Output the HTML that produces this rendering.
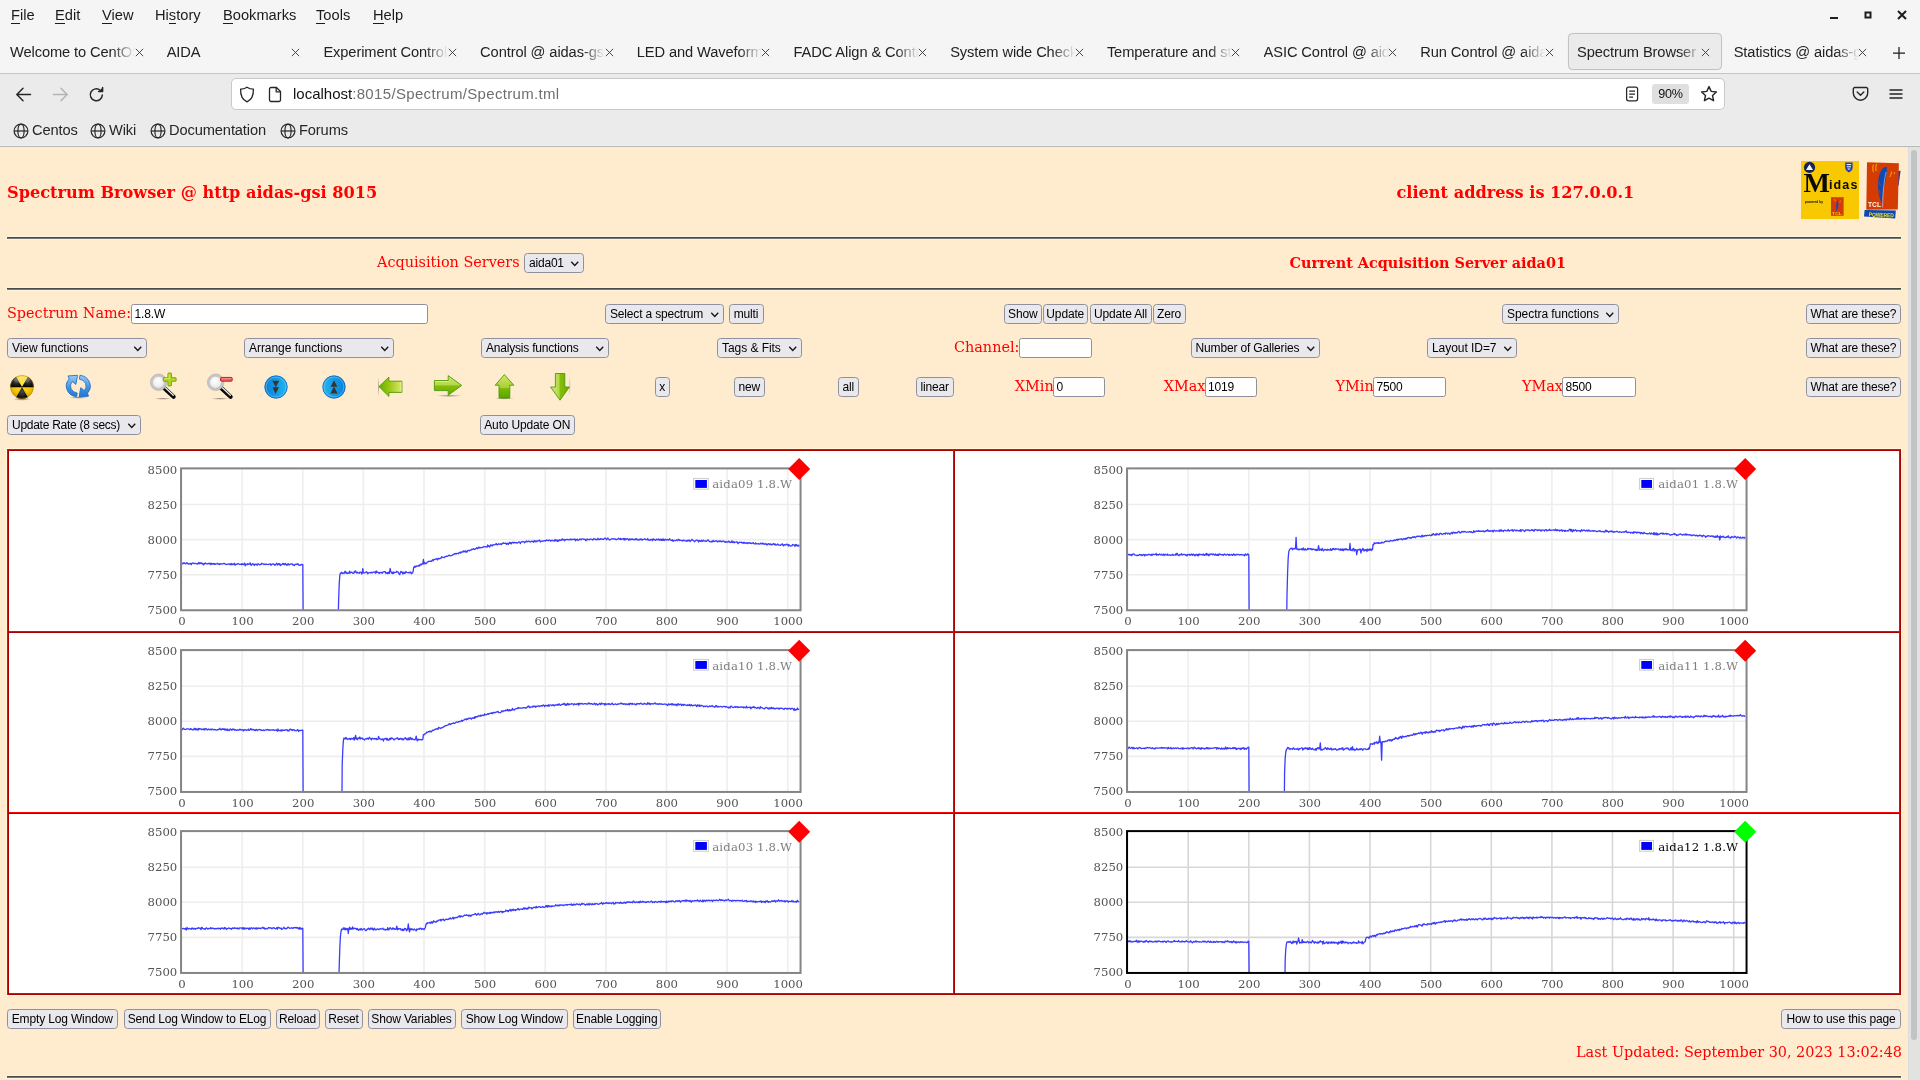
<!DOCTYPE html>
<html lang="en">
<head>
<meta charset="utf-8">
<title>Spectrum Browser</title>
<style>
*{box-sizing:border-box;margin:0;padding:0}
html,body{width:1920px;height:1080px;overflow:hidden;background:#ffebcd}
body{position:relative;font-family:"Liberation Sans",sans-serif;color:#000}
#root{position:absolute;left:0;top:0;width:1920px;height:1080px;overflow:hidden;will-change:transform}
.abs{position:absolute}
/* ---------- browser chrome ---------- */
#chrome{position:absolute;left:0;top:0;width:1920px;height:147px;background:#ebebeb;border-bottom:1px solid #b6b8b6;box-shadow:inset 0 -1px 0 #f0f0f0}
#titlebar{position:absolute;left:0;top:0;width:1920px;height:74px;background:#f5f5f5;border-bottom:1px solid #c6c6c6}
.menu{position:absolute;top:6px;font-size:14.67px;line-height:18px;color:#1b1b1b;white-space:nowrap}
.menu .ul{position:absolute;top:17px;height:1px;background:#1b1b1b}
.tab{position:absolute;top:34px;height:36px;width:153px;font-size:14.67px;line-height:36px;color:#222;white-space:nowrap;letter-spacing:-0.1px}
.tab .t{position:absolute;left:8px;top:0;width:125px;overflow:hidden;-webkit-mask-image:linear-gradient(90deg,#000 82%,transparent 100%);mask-image:linear-gradient(90deg,#000 82%,transparent 100%)}
.tab .x{position:absolute;left:132.5px;top:13.5px;width:9px;height:9px}
.tab.cur{background:#ebebeb;border:1px solid #c2c2c2;border-radius:4.5px;box-shadow:0 0 1px rgba(0,0,0,.12);width:154px;height:37px;top:33px}
.tab.cur .t{left:8px;top:0}
.tab.cur .x{left:131.5px;top:13.5px}
.ico{position:absolute}
#urlbar{position:absolute;left:231px;top:78px;width:1494px;height:32px;background:#fff;border:1px solid #c9c9c9;border-radius:5px}
#url{position:absolute;left:293px;top:84px;font-size:15px;line-height:20px;color:#111;white-space:nowrap}
#url span{color:#6f6f6f;letter-spacing:0.33px}
#zoom90{position:absolute;left:1652px;top:84px;width:37px;height:20px;background:#dfdfdf;border-radius:3px;font-size:12.6px;line-height:21.5px;letter-spacing:-0.2px;text-align:center;color:#111}
.bm{position:absolute;top:120px;font-size:14.67px;line-height:20px;color:#262626;white-space:nowrap;letter-spacing:-0.12px}
/* ---------- page ---------- */
.serif{font-family:"DejaVu Serif","Liberation Serif",serif}
.red{color:#ff0000}
.lbl{position:absolute;font-family:"DejaVu Serif","Liberation Serif",serif;color:#ff0000;font-size:14.4px;line-height:18px;white-space:nowrap}
.h{position:absolute;font-family:"DejaVu Serif","Liberation Serif",serif;color:#ff0000;font-weight:bold;white-space:nowrap}
.hr{position:absolute;left:7px;width:1894px;height:2px;background:linear-gradient(#484b50 0,#484b50 50%,#74777b 50%,#74777b 100%);box-shadow:0 0 0 1px #fff3d8}
button,.btn{position:absolute;height:19px;background:#e9e9ed;border:1px solid #8f8f9d;border-radius:3.5px;font-family:"Liberation Sans",sans-serif;font-size:12px;line-height:17px;color:#000;text-align:center;white-space:nowrap;letter-spacing:-0.15px;padding:1px 0 0 0}
.sel{position:absolute;height:20px;background:#e9e9ed;border:1px solid #8f8f9d;border-radius:3.5px;font-family:"Liberation Sans",sans-serif;font-size:12px;line-height:18px;color:#000;white-space:nowrap;letter-spacing:-0.05px;padding-left:4px}
.sel svg{position:absolute;right:3.5px;top:6px;width:9.5px;height:7.5px}
.inp{position:absolute;height:20px;background:#fff;border:1px solid #8f8f9d;border-radius:2.5px;font-family:"Liberation Sans",sans-serif;font-size:12px;line-height:18px;color:#000;padding-left:2.5px;letter-spacing:-0.15px;white-space:nowrap}
/* midas logo wordmark */
.midas{position:absolute;left:1803.6px;top:168.2px;font-family:"Liberation Sans",sans-serif;font-weight:bold;font-size:12.5px;line-height:30px;letter-spacing:1.1px;color:#0a0a0a;white-space:nowrap}
.midas::first-letter{font-family:"Liberation Serif",serif;font-size:28px;letter-spacing:-1px;vertical-align:-3px}
/* gallery */
#gal{position:absolute;left:7px;top:449px;width:1894px;height:546px;background:#fff}
.gl{position:absolute}
.tick{font-family:"DejaVu Serif","Liberation Serif",serif;font-size:11.7px;fill:#545454}
.leg{font-family:"DejaVu Serif","Liberation Serif",serif;font-size:11.7px;letter-spacing:0.17px}
</style>
</head>
<body>
<div id="root">

<div id="chrome">
<div id="titlebar"></div>
<div class="menu" style="left:11px">File<i class="ul" style="left:0.0px;width:9.0px"></i></div>
<div class="menu" style="left:55px">Edit<i class="ul" style="left:0.0px;width:9.8px"></i></div>
<div class="menu" style="left:102px">View<i class="ul" style="left:0.0px;width:9.8px"></i></div>
<div class="menu" style="left:155px">History<i class="ul" style="left:13.9px;width:7.3px"></i></div>
<div class="menu" style="left:223px">Bookmarks<i class="ul" style="left:0.0px;width:9.8px"></i></div>
<div class="menu" style="left:316px">Tools<i class="ul" style="left:0.0px;width:9.0px"></i></div>
<div class="menu" style="left:373px">Help<i class="ul" style="left:0.0px;width:10.6px"></i></div>
<svg class="ico" style="left:1826px;top:7px" width="90" height="18" viewBox="0 0 90 18" fill="none" stroke="#1e1e1e"><path d="M4 11 H12" stroke-width="2"/><rect x="39.5" y="5.5" width="5" height="5" stroke-width="2"/><path d="M72 4 L80 12 M80 4 L72 12" stroke-width="2"/></svg>
<div class="tab" style="left:2px"><div class="t">Welcome to CentOS</div><svg class="x" viewBox="0 0 12 12"><path d="M1.5 1.5 L10.5 10.5 M10.5 1.5 L1.5 10.5" stroke="#3c3c3c" stroke-width="1.25" fill="none" stroke-linecap="round"/></svg></div>
<div class="tab" style="left:158.7px"><div class="t">AIDA</div><svg class="x" viewBox="0 0 12 12"><path d="M1.5 1.5 L10.5 10.5 M10.5 1.5 L1.5 10.5" stroke="#3c3c3c" stroke-width="1.25" fill="none" stroke-linecap="round"/></svg></div>
<div class="tab" style="left:315.4px"><div class="t">Experiment Control</div><svg class="x" viewBox="0 0 12 12"><path d="M1.5 1.5 L10.5 10.5 M10.5 1.5 L1.5 10.5" stroke="#3c3c3c" stroke-width="1.25" fill="none" stroke-linecap="round"/></svg></div>
<div class="tab" style="left:472.1px"><div class="t">Control @ aidas-gsi</div><svg class="x" viewBox="0 0 12 12"><path d="M1.5 1.5 L10.5 10.5 M10.5 1.5 L1.5 10.5" stroke="#3c3c3c" stroke-width="1.25" fill="none" stroke-linecap="round"/></svg></div>
<div class="tab" style="left:628.8px"><div class="t">LED and Waveform</div><svg class="x" viewBox="0 0 12 12"><path d="M1.5 1.5 L10.5 10.5 M10.5 1.5 L1.5 10.5" stroke="#3c3c3c" stroke-width="1.25" fill="none" stroke-linecap="round"/></svg></div>
<div class="tab" style="left:785.5px"><div class="t">FADC Align &amp; Control</div><svg class="x" viewBox="0 0 12 12"><path d="M1.5 1.5 L10.5 10.5 M10.5 1.5 L1.5 10.5" stroke="#3c3c3c" stroke-width="1.25" fill="none" stroke-linecap="round"/></svg></div>
<div class="tab" style="left:942.2px"><div class="t">System wide Checks</div><svg class="x" viewBox="0 0 12 12"><path d="M1.5 1.5 L10.5 10.5 M10.5 1.5 L1.5 10.5" stroke="#3c3c3c" stroke-width="1.25" fill="none" stroke-linecap="round"/></svg></div>
<div class="tab" style="left:1098.9px"><div class="t">Temperature and st</div><svg class="x" viewBox="0 0 12 12"><path d="M1.5 1.5 L10.5 10.5 M10.5 1.5 L1.5 10.5" stroke="#3c3c3c" stroke-width="1.25" fill="none" stroke-linecap="round"/></svg></div>
<div class="tab" style="left:1255.6px"><div class="t">ASIC Control @ aida</div><svg class="x" viewBox="0 0 12 12"><path d="M1.5 1.5 L10.5 10.5 M10.5 1.5 L1.5 10.5" stroke="#3c3c3c" stroke-width="1.25" fill="none" stroke-linecap="round"/></svg></div>
<div class="tab" style="left:1412.3px"><div class="t">Run Control @ aidas</div><svg class="x" viewBox="0 0 12 12"><path d="M1.5 1.5 L10.5 10.5 M10.5 1.5 L1.5 10.5" stroke="#3c3c3c" stroke-width="1.25" fill="none" stroke-linecap="round"/></svg></div>
<div class="tab cur" style="left:1568px"><div class="t">Spectrum Browser @</div><svg class="x" viewBox="0 0 12 12"><path d="M1.5 1.5 L10.5 10.5 M10.5 1.5 L1.5 10.5" stroke="#3c3c3c" stroke-width="1.25" fill="none" stroke-linecap="round"/></svg></div>
<div class="tab" style="left:1725.7px"><div class="t">Statistics @ aidas-gsi</div><svg class="x" viewBox="0 0 12 12"><path d="M1.5 1.5 L10.5 10.5 M10.5 1.5 L1.5 10.5" stroke="#3c3c3c" stroke-width="1.25" fill="none" stroke-linecap="round"/></svg></div>
<svg class="ico" style="left:1892px;top:45.5px" width="14" height="14" viewBox="0 0 14 14"><path d="M7 1 V13 M1 7 H13" stroke="#1e1e1e" stroke-width="1.25" fill="none"/></svg>
<svg class="ico" style="left:15px;top:86px" width="17" height="17" viewBox="0 0 17 17" fill="none" stroke="#262626" stroke-width="1.5" stroke-linecap="round" stroke-linejoin="round"><path d="M15.5 8.5 H2 M8 2.3 L1.8 8.5 L8 14.7"/></svg>
<svg class="ico" style="left:52px;top:86px" width="17" height="17" viewBox="0 0 17 17" fill="none" stroke="#b4b4b4" stroke-width="1.5" stroke-linecap="round" stroke-linejoin="round"><path d="M1.5 8.5 H15 M9 2.3 L15.2 8.5 L9 14.7"/></svg>
<svg class="ico" style="left:88px;top:86px" width="17" height="17" viewBox="0 0 17 17" fill="none" stroke="#262626" stroke-width="1.5" stroke-linecap="round" stroke-linejoin="round"><path d="M14.3 9 A6 6 0 1 1 12.2 4.2"/><path d="M14.6 1.6 V5.6 H10.6" fill="#262626"/></svg>
<div id="urlbar"></div>
<svg class="ico" style="left:239px;top:86px" width="16" height="17" viewBox="0 0 16 17" fill="none" stroke="#262626" stroke-width="1.3" stroke-linejoin="round"><path d="M8 1.2 C6 2.6 3.8 3.2 1.6 3.2 C1.4 9 3.2 13.6 8 15.8 C12.8 13.6 14.6 9 14.4 3.2 C12.2 3.2 10 2.6 8 1.2 Z"/></svg>
<svg class="ico" style="left:268px;top:86px" width="14" height="17" viewBox="0 0 14 17" fill="none" stroke="#262626" stroke-width="1.3" stroke-linejoin="round"><path d="M3 1.5 H8.5 L12.5 5.5 V14 A1.5 1.5 0 0 1 11 15.5 H3 A1.5 1.5 0 0 1 1.5 14 V3 A1.5 1.5 0 0 1 3 1.5 Z"/><path d="M8.2 1.8 V5.8 H12.2"/></svg>
<div id="url">localhost<span>:8015/Spectrum/Spectrum.tml</span></div>
<svg class="ico" style="left:1625px;top:86px" width="14" height="16" viewBox="0 0 14 16" fill="none" stroke="#262626" stroke-width="1.25"><rect x="1.6" y="1.2" width="11" height="13.6" rx="2"/><path d="M4.2 5 H10 M4.2 8 H10 M4.2 11 H8"/></svg>
<div id="zoom90">90%</div>
<svg class="ico" style="left:1700px;top:85px" width="18" height="18" viewBox="0 0 18 18" fill="none" stroke="#262626" stroke-width="1.4" stroke-linejoin="round"><path d="M9 1.6 L11.2 6.4 L16.4 7 L12.5 10.5 L13.6 15.7 L9 13.1 L4.4 15.7 L5.5 10.5 L1.6 7 L6.8 6.4 Z"/></svg>
<svg class="ico" style="left:1852px;top:86px" width="17" height="16" viewBox="0 0 17 16" fill="none" stroke="#262626" stroke-width="1.4" stroke-linecap="round" stroke-linejoin="round"><path d="M2.8 1.5 H14.2 A1.5 1.5 0 0 1 15.7 3 V7 A7.2 7.2 0 0 1 1.3 7 V3 A1.5 1.5 0 0 1 2.8 1.5 Z"/><path d="M5.2 6 L8.5 9.2 L11.8 6"/></svg>
<svg class="ico" style="left:1888px;top:87px" width="16" height="14" viewBox="0 0 16 14" fill="none" stroke="#262626" stroke-width="1.5"><path d="M1.5 3 H14.5 M1.5 7 H14.5 M1.5 11 H14.5"/></svg>
<svg class="ico" style="left:12.5px;top:122.5px" width="16" height="16" viewBox="0 0 16 16" fill="none" stroke="#2b2b2b" stroke-width="1.25"><circle cx="8" cy="8" r="6.9"/><ellipse cx="8" cy="8" rx="3.1" ry="6.9"/><path d="M1.2 8 H14.8"/></svg>
<div class="bm" style="left:32px">Centos</div>
<svg class="ico" style="left:89.5px;top:122.5px" width="16" height="16" viewBox="0 0 16 16" fill="none" stroke="#2b2b2b" stroke-width="1.25"><circle cx="8" cy="8" r="6.9"/><ellipse cx="8" cy="8" rx="3.1" ry="6.9"/><path d="M1.2 8 H14.8"/></svg>
<div class="bm" style="left:109px">Wiki</div>
<svg class="ico" style="left:149.5px;top:122.5px" width="16" height="16" viewBox="0 0 16 16" fill="none" stroke="#2b2b2b" stroke-width="1.25"><circle cx="8" cy="8" r="6.9"/><ellipse cx="8" cy="8" rx="3.1" ry="6.9"/><path d="M1.2 8 H14.8"/></svg>
<div class="bm" style="left:169px">Documentation</div>
<svg class="ico" style="left:279.5px;top:122.5px" width="16" height="16" viewBox="0 0 16 16" fill="none" stroke="#2b2b2b" stroke-width="1.25"><circle cx="8" cy="8" r="6.9"/><ellipse cx="8" cy="8" rx="3.1" ry="6.9"/><path d="M1.2 8 H14.8"/></svg>
<div class="bm" style="left:299px">Forums</div>
</div>
<div class="h" style="left:7px;top:183px;font-size:16.15px;line-height:20px">Spectrum Browser @ http aidas-gsi 8015</div>
<div class="h" style="left:1396.5px;top:183px;font-size:16.15px;line-height:20px">client address is 127.0.0.1</div>
<div class="hr" style="top:237px"></div>
<div class="lbl" style="left:377px;top:253px;">Acquisition Servers</div>
<div class="sel" style="left:524px;top:253px;width:60px;height:19.5px;line-height:19.5px;letter-spacing:-0.2px">aida01<svg viewBox="0 0 9 7"><path d="M1.2 1.7 L4.5 5.1 L7.8 1.7" fill="none" stroke="#151515" stroke-width="1.3"/></svg></div>
<div class="h" style="left:1289.5px;top:254px;font-size:14.4px;line-height:18px">Current Acquisition Server aida01</div>
<div class="hr" style="top:288px"></div>
<div class="lbl" style="left:7px;top:304px;">Spectrum Name:</div>
<div class="inp" style="left:131px;top:304px;width:297px;height:20px">1.8.W</div>
<div class="sel" style="left:605px;top:304px;width:118.5px;height:20px;line-height:18px;letter-spacing:-0.17px">Select a spectrum<svg viewBox="0 0 9 7"><path d="M1.2 1.7 L4.5 5.1 L7.8 1.7" fill="none" stroke="#151515" stroke-width="1.3"/></svg></div>
<button style="left:728.5px;top:304px;width:35px;height:20px">multi</button>
<button style="left:1004px;top:304px;width:37.5px;height:20px">Show</button>
<button style="left:1042.5px;top:304px;width:45.5px;height:20px">Update</button>
<button style="left:1089.5px;top:304px;width:62px;height:20px">Update All</button>
<button style="left:1152.5px;top:304px;width:33px;height:20px">Zero</button>
<div class="sel" style="left:1502px;top:304px;width:117px;height:20px;line-height:18px">Spectra functions<svg viewBox="0 0 9 7"><path d="M1.2 1.7 L4.5 5.1 L7.8 1.7" fill="none" stroke="#151515" stroke-width="1.3"/></svg></div>
<button style="left:1806px;top:304px;width:95px;height:20px">What are these?</button>
<div class="sel" style="left:7px;top:338px;width:140px;height:20px;line-height:18px">View functions<svg viewBox="0 0 9 7"><path d="M1.2 1.7 L4.5 5.1 L7.8 1.7" fill="none" stroke="#151515" stroke-width="1.3"/></svg></div>
<div class="sel" style="left:244px;top:338px;width:150px;height:20px;line-height:18px">Arrange functions<svg viewBox="0 0 9 7"><path d="M1.2 1.7 L4.5 5.1 L7.8 1.7" fill="none" stroke="#151515" stroke-width="1.3"/></svg></div>
<div class="sel" style="left:481px;top:338px;width:127.5px;height:20px;line-height:18px;letter-spacing:-0.2px">Analysis functions<svg viewBox="0 0 9 7"><path d="M1.2 1.7 L4.5 5.1 L7.8 1.7" fill="none" stroke="#151515" stroke-width="1.3"/></svg></div>
<div class="sel" style="left:717px;top:338px;width:84.5px;height:20px;line-height:18px">Tags &amp; Fits<svg viewBox="0 0 9 7"><path d="M1.2 1.7 L4.5 5.1 L7.8 1.7" fill="none" stroke="#151515" stroke-width="1.3"/></svg></div>
<div class="lbl" style="left:954px;top:338px;">Channel:</div>
<div class="inp" style="left:1019px;top:338px;width:73px;height:20px"></div>
<div class="sel" style="left:1190.5px;top:338px;width:129.5px;height:20px;line-height:18px;letter-spacing:-0.15px">Number of Galleries<svg viewBox="0 0 9 7"><path d="M1.2 1.7 L4.5 5.1 L7.8 1.7" fill="none" stroke="#151515" stroke-width="1.3"/></svg></div>
<div class="sel" style="left:1427px;top:338px;width:90px;height:20px;line-height:18px">Layout ID=7<svg viewBox="0 0 9 7"><path d="M1.2 1.7 L4.5 5.1 L7.8 1.7" fill="none" stroke="#151515" stroke-width="1.3"/></svg></div>
<button style="left:1806px;top:338px;width:95px;height:20px">What are these?</button>
<button style="left:655px;top:377px;width:14.5px;height:20px">x</button>
<button style="left:734px;top:377px;width:30.5px;height:20px">new</button>
<button style="left:838px;top:377px;width:20.5px;height:20px">all</button>
<button style="left:916px;top:377px;width:37.5px;height:20px">linear</button>
<div class="lbl" style="left:1014.8px;top:377px;">XMin</div>
<div class="inp" style="left:1053px;top:377px;width:52px;height:20px">0</div>
<div class="lbl" style="left:1163.7px;top:377px;">XMax</div>
<div class="inp" style="left:1204.5px;top:377px;width:52.5px;height:20px">1019</div>
<div class="lbl" style="left:1335.6px;top:377px;">YMin</div>
<div class="inp" style="left:1373px;top:377px;width:73px;height:20px">7500</div>
<div class="lbl" style="left:1522px;top:377px;">YMax</div>
<div class="inp" style="left:1562px;top:377px;width:74px;height:20px">8500</div>
<button style="left:1806px;top:377px;width:95px;height:20px">What are these?</button>
<div class="sel" style="left:7px;top:415px;width:133.5px;height:19.5px;line-height:19.5px;letter-spacing:-0.27px">Update Rate (8 secs)<svg viewBox="0 0 9 7"><path d="M1.2 1.7 L4.5 5.1 L7.8 1.7" fill="none" stroke="#151515" stroke-width="1.3"/></svg></div>
<button style="left:480px;top:415px;width:94.5px;height:20px">Auto Update ON</button>
<button style="left:7px;top:1009px;width:110.5px;height:20px">Empty Log Window</button>
<button style="left:123.5px;top:1009px;width:147px;height:20px">Send Log Window to ELog</button>
<button style="left:275.5px;top:1009px;width:44px;height:20px">Reload</button>
<button style="left:324.5px;top:1009px;width:38px;height:20px">Reset</button>
<button style="left:367.5px;top:1009px;width:88px;height:20px">Show Variables</button>
<button style="left:461px;top:1009px;width:106.5px;height:20px">Show Log Window</button>
<button style="left:573px;top:1009px;width:87.5px;height:20px">Enable Logging</button>
<button style="left:1781px;top:1009px;width:120px;height:20px">How to use this page</button>
<div class="lbl" style="left:1576px;top:1043px;">Last Updated: September 30, 2023 13:02:48</div>
<div class="hr" style="top:1076px"></div>
<div class="abs" style="left:1908px;top:147px;width:12px;height:933px;background:#e2e2e0;border-left:1px solid #dcdcdc"></div>
<div class="abs" style="left:1911px;top:150px;width:6px;height:890px;background:#c2c4c3;border-radius:3px"></div>
<svg width="0" height="0" style="position:absolute"><defs>
<radialGradient id="gY" cx="50%" cy="35%" r="70%"><stop offset="0" stop-color="#ffe83a"/><stop offset="0.6" stop-color="#f5c400"/><stop offset="1" stop-color="#c89600"/></radialGradient>
<radialGradient id="gK" cx="50%" cy="40%" r="60%"><stop offset="0" stop-color="#4a4a4a"/><stop offset="1" stop-color="#050505"/></radialGradient>
<linearGradient id="gHi" x1="0" y1="0" x2="0" y2="1"><stop offset="0" stop-color="#fff" stop-opacity=".85"/><stop offset="1" stop-color="#fff" stop-opacity="0"/></linearGradient>
<linearGradient id="gB" gradientUnits="userSpaceOnUse" x1="0" y1="0" x2="0" y2="23"><stop offset="0" stop-color="#9ccdf6"/><stop offset="0.5" stop-color="#4598e6"/><stop offset="1" stop-color="#1c72d4"/></linearGradient>
<radialGradient id="gLens" cx="45%" cy="40%" r="60%"><stop offset="0" stop-color="#ffffff"/><stop offset="0.7" stop-color="#ececec"/><stop offset="1" stop-color="#d2d2d2"/></radialGradient>
<linearGradient id="gCd" x1="0" y1="0" x2="1" y2="0"><stop offset="0" stop-color="#0a7fd6"/><stop offset="1" stop-color="#22b4f2"/></linearGradient>
<linearGradient id="gCu" x1="0" y1="0" x2="1" y2="0"><stop offset="0" stop-color="#22b4f2"/><stop offset="1" stop-color="#0a7fd6"/></linearGradient>
<linearGradient id="gGl" x1="0" y1="0" x2="1" y2="0"><stop offset="0" stop-color="#5fae00"/><stop offset="0.45" stop-color="#9cc814"/><stop offset="1" stop-color="#dcea6a"/></linearGradient>
<linearGradient id="gGr" x1="0" y1="0" x2="0" y2="1"><stop offset="0" stop-color="#cfe47a"/><stop offset="0.48" stop-color="#b4d848"/><stop offset="0.52" stop-color="#86be08"/><stop offset="1" stop-color="#62ac00"/></linearGradient>
<linearGradient id="gGu" x1="0" y1="0" x2="0" y2="1"><stop offset="0" stop-color="#d4e872"/><stop offset="0.55" stop-color="#a8d030"/><stop offset="0.6" stop-color="#7cba08"/><stop offset="1" stop-color="#58a600"/></linearGradient>
<linearGradient id="gGd" x1="0" y1="0" x2="1" y2="0"><stop offset="0" stop-color="#d6ea80"/><stop offset="0.45" stop-color="#b2d848"/><stop offset="0.5" stop-color="#86be08"/><stop offset="1" stop-color="#66ae00"/></linearGradient>
<radialGradient id="gSh" cx="50%" cy="50%" r="50%"><stop offset="0" stop-color="#000" stop-opacity=".45"/><stop offset="1" stop-color="#000" stop-opacity="0"/></radialGradient>
</defs></svg>
<svg class="abs" style="left:9.6px;top:375.3px;overflow:visible" width="24" height="24" viewBox="0 0 24 24"><ellipse cx="12" cy="24.2" rx="9" ry="1.6" fill="url(#gSh)"/><circle cx="12" cy="12" r="11.7" fill="url(#gY)"/><path d="M12 12 L23.70 12.00 A11.7 11.7 0 0 0 17.85 1.87 Z" fill="url(#gK)"/><path d="M12 12 L6.15 1.87 A11.7 11.7 0 0 0 0.30 12.00 Z" fill="url(#gK)"/><path d="M12 12 L6.15 22.13 A11.7 11.7 0 0 0 17.85 22.13 Z" fill="url(#gK)"/><path d="M0.3 12 H23.7" stroke="#15130a" stroke-width="0.7" opacity=".8"/><ellipse cx="12" cy="5" rx="8" ry="4" fill="url(#gHi)" opacity=".55"/><circle cx="12" cy="12" r="11.399999999999999" fill="none" stroke="#a87c00" stroke-width="0.6" opacity=".7"/></svg>
<svg class="abs" style="left:66px;top:375.4px;overflow:visible" width="25" height="23" viewBox="0 0 25 23"><ellipse cx="12.5" cy="22.6" rx="9.5" ry="1.2" fill="url(#gSh)"/><path d="M10.63 21.84 A12 10.9 0 0 1 3.11 4.04 L2.10 0.90 L11.50 0.30 L9.90 9.40 L6.32 6.55 A7.8 7.0 0 0 0 11.21 17.98 Z" fill="url(#gB)" stroke="#1a66c6" stroke-width="0.8" stroke-linejoin="round"/><path d="M13.97 0.26 A12 10.9 0 0 1 21.49 18.06 L22.50 21.20 L13.10 21.80 L14.70 12.70 L18.28 15.55 A7.8 7.0 0 0 0 13.39 4.12 Z" fill="url(#gB)" stroke="#1a66c6" stroke-width="0.8" stroke-linejoin="round"/></svg>
<svg class="abs" style="left:150.15px;top:372.8px;overflow:visible" width="27" height="27" viewBox="0 0 27 27"><ellipse cx="13" cy="25.7" rx="8.5" ry="1.1" fill="url(#gSh)"/><path d="M13.8 14.6 L23.6 23.8" stroke="#0a0a0a" stroke-width="4.2" stroke-linecap="round"/><path d="M15.4 14.8 L23.3 22.2" stroke="#f8f8f8" stroke-width="1.3" stroke-linecap="round" opacity=".95"/><circle cx="8.6" cy="9.3" r="7.2" fill="url(#gLens)" stroke="#c6c6c6" stroke-width="2.2"/><circle cx="8.6" cy="9.3" r="8.3" fill="none" stroke="#a8a8a8" stroke-width="0.5"/><circle cx="8.6" cy="9.3" r="6.0" fill="none" stroke="#b4b4b4" stroke-width="0.5"/><path d="M17.95 0.5 Q17.95 0.1 18.35 0.1 H21.05 Q21.45 0.1 21.45 0.5 V4.75 H25.7 Q26.1 4.75 26.1 5.15 V7.85 Q26.1 8.25 25.7 8.25 H21.45 V12.5 Q21.45 12.9 21.05 12.9 H18.35 Q17.95 12.9 17.95 12.5 V8.25 H13.7 Q13.3 8.25 13.3 7.85 V5.15 Q13.3 4.75 13.7 4.75 H17.95 Z" fill="#b4da1e" stroke="#6e9e00" stroke-width="0.9" stroke-linejoin="round"/><path d="M19.2 1.2 V5.6 H14.4" stroke="#e2f278" stroke-width="0.9" fill="none" opacity=".9"/></svg>
<svg class="abs" style="left:206.70000000000002px;top:372.8px;overflow:visible" width="27" height="27" viewBox="0 0 27 27"><ellipse cx="13" cy="25.7" rx="8.5" ry="1.1" fill="url(#gSh)"/><path d="M13.8 14.6 L23.6 23.8" stroke="#0a0a0a" stroke-width="4.2" stroke-linecap="round"/><path d="M15.4 14.8 L23.3 22.2" stroke="#f8f8f8" stroke-width="1.3" stroke-linecap="round" opacity=".95"/><circle cx="8.6" cy="9.3" r="7.2" fill="url(#gLens)" stroke="#c6c6c6" stroke-width="2.2"/><circle cx="8.6" cy="9.3" r="8.3" fill="none" stroke="#a8a8a8" stroke-width="0.5"/><circle cx="8.6" cy="9.3" r="6.0" fill="none" stroke="#b4b4b4" stroke-width="0.5"/><rect x="13.6" y="4.45" width="11.6" height="3.75" rx="0.9" fill="#ee6464" stroke="#c20c0c" stroke-width="0.9"/><path d="M14.6 5.6 H24.2" stroke="#f8a0a0" stroke-width="0.8" opacity=".9"/></svg>
<svg class="abs" style="left:264.25px;top:374.5px;overflow:visible" width="24" height="24" viewBox="0 0 24 24"><circle cx="12" cy="12" r="11.2" fill="url(#gCd)" stroke="#0b6cc4" stroke-width="0.9"/><circle cx="12" cy="12" r="9.9" fill="none" stroke="#7fd0f8" stroke-width="0.7" opacity=".75"/><path d="M8.3 5.7 H15.2 L11.8 12.3 Z M8.4 12.2 H15.0 L11.6 18.8 Z" fill="#363433"/></svg>
<svg class="abs" style="left:322.4px;top:374.5px;overflow:visible" width="24" height="24" viewBox="0 0 24 24"><circle cx="12" cy="12" r="11.2" fill="url(#gCu)" stroke="#0b6cc4" stroke-width="0.9"/><circle cx="12" cy="12" r="9.9" fill="none" stroke="#7fd0f8" stroke-width="0.7" opacity=".75"/><path d="M12 5.2 L15.4 11.8 H8.6 Z M12 11.6 L15.6 18.4 H8.4 Z" fill="#363433"/></svg>
<svg class="abs" style="left:370px;top:366px;overflow:visible" width="40" height="40" viewBox="0 0 40 40"><rect x="7.6" y="11" width="1.4" height="19.5" fill="url(#gSh)" opacity=".9"/><path d="M9.0 20.6 L18.9 11.1 V15.2 H31.9 V26.4 H18.9 V30.4 Z" fill="url(#gGl)" stroke="#4e9a06" stroke-width="0.9" stroke-linejoin="round"/><path d="M31.0 16 V25.6" stroke="#f2f8b0" stroke-width="0.8" opacity=".9"/></svg>
<svg class="abs" style="left:370px;top:366px;overflow:visible" width="100" height="40" viewBox="0 0 100 40"><ellipse cx="79" cy="29.8" rx="13" ry="1.1" fill="url(#gSh)"/><path d="M64.4 14.5 H78.2 V9.6 L91.7 19.4 L78.2 29.2 V24.6 H64.4 Z" fill="url(#gGr)" stroke="#4e9a06" stroke-width="0.9" stroke-linejoin="round"/><path d="M65.4 15.5 H78.8" stroke="#eef6b8" stroke-width="0.8" opacity=".8"/></svg>
<svg class="abs" style="left:470px;top:366px;overflow:visible" width="60" height="40" viewBox="0 0 60 40"><ellipse cx="34.4" cy="32.4" rx="9.5" ry="1.2" fill="url(#gSh)"/><path d="M34.4 8.6 L43.8 19.2 H39.8 V32.0 H29.0 V19.2 H25.2 Z" fill="url(#gGu)" stroke="#4e9a06" stroke-width="0.9" stroke-linejoin="round"/></svg>
<svg class="abs" style="left:470px;top:366px;overflow:visible" width="110" height="40" viewBox="0 0 110 40"><rect x="99.2" y="8" width="1.4" height="24" fill="url(#gSh)" opacity=".9"/><path d="M85.4 7.5 H94.8 V21.0 H99.4 L90.0 34.2 L80.6 21.0 H85.4 Z" fill="url(#gGd)" stroke="#4e9a06" stroke-width="0.9" stroke-linejoin="round"/></svg>
<svg class="abs" style="left:1801px;top:161px;overflow:visible" width="58" height="58" viewBox="0 0 58 58"><rect x="0" y="0" width="58" height="58" fill="#f8c800"/><circle cx="8.5" cy="6.4" r="5.6" fill="#14245a"/><path d="M8.5 3.2 L12 9 H5 Z" fill="#f4f4f4"/><path d="M4.2 9.6 H12.8" stroke="#14245a" stroke-width="1"/><path d="M44.2 1.6 H51.6 V6.6 C51.6 9.2 49.8 10.6 47.9 11.4 C46 10.6 44.2 9.2 44.2 6.6 Z" fill="#1c3cb4"/><path d="M45.6 3.6 H50.2 M45.8 5.8 H50 M46.6 8 H49.2" stroke="#fff" stroke-width="1"/><text x="4" y="41.6" font-family="'Liberation Sans',sans-serif" font-weight="bold" font-size="3.6px" fill="#0a0a0a" textLength="18" lengthAdjust="spacingAndGlyphs">powered by</text><rect x="30" y="36.2" width="12.6" height="18.6" fill="#d63a0a"/><path d="M36.8 39 C35 42 34.6 46 35.6 50.6 C37.4 47 38 42.6 36.8 39 Z" fill="#1a46b8"/><path d="M33.4 38 L34.2 40.4 M39.6 39.6 L38.8 41.6" stroke="#f8c800" stroke-width="0.6"/><text x="31" y="53.6" font-family="'Liberation Sans',sans-serif" font-weight="bold" font-size="2.6px" fill="#f8c800" textLength="10" lengthAdjust="spacingAndGlyphs">TCL</text></svg>
<div class="midas">Midas</div>
<svg class="abs" style="left:1862px;top:160px;overflow:visible" width="40" height="60" viewBox="0 0 40 60"><path d="M30.6 11.2 L38.6 10.8 L36.6 25.6 L30.6 26 Z" fill="#0c46b0"/><path d="M2.6 50 L33.8 50.4 L33.2 58.6 L2.0 56.6 Z" fill="#0c46b0"/><path d="M5.0 2.2 L36.9 3.2 L35.8 49.4 L4.3 49.7 Z" fill="#d43c04"/><path d="M24.6 6.6 C20.4 7.2 17.4 12 16.4 19.6 C15.4 27.4 16.4 36.6 20.4 44.6 C20.2 38 20.8 31.4 22.2 25.6 C23.6 19.6 25.6 14.2 24.6 6.6 Z" fill="#0e4ab4"/><path d="M24.2 12 C22 20 20.8 32 20.6 47.4" stroke="#e8eef8" stroke-width="0.5" fill="none"/><path d="M17.2 22 L18.4 26 M16.6 30 L18.2 33.4 M23.6 24 L22.4 27.6" stroke="#d43c04" stroke-width="0.7"/><path d="M11.4 4.6 C10.6 7.2 10.6 9.6 11.4 12.2 M14.6 3.8 C13.6 6.6 13.6 9 14.2 11" stroke="#f8b800" stroke-width="1" fill="none"/><path d="M29.4 11.4 C29.4 13.6 28.8 15.4 27.8 17 M32.6 12.2 L32.0 14" stroke="#f8b800" stroke-width="0.9" fill="none"/><text x="6" y="46.8" font-family="'Liberation Sans',sans-serif" font-weight="bold" font-size="6.4px" fill="#fdf6ee" textLength="13" lengthAdjust="spacingAndGlyphs">TCL</text><text x="6.8" y="56.6" font-family="'Liberation Sans',sans-serif" font-weight="bold" font-size="6px" fill="#f6e418" textLength="25" lengthAdjust="spacingAndGlyphs" transform="rotate(2 6 56)">POWERED</text></svg>
<div class="gl" style="left:6px;top:448px;width:1896px;height:548px;background:#fff6d8"></div>
<div id="gal"></div>
<div class="gl" style="left:7px;top:449px;width:1894px;height:1px;background:#ff0000"></div>
<div class="gl" style="left:7px;top:450px;width:1894px;height:1px;background:#aa0000"></div>
<div class="gl" style="left:7px;top:631px;width:1894px;height:1px;background:#ff0000"></div>
<div class="gl" style="left:7px;top:632px;width:1894px;height:1px;background:#aa0000"></div>
<div class="gl" style="left:7px;top:812px;width:1894px;height:1px;background:#ff0000"></div>
<div class="gl" style="left:7px;top:813px;width:1894px;height:1px;background:#aa0000"></div>
<div class="gl" style="left:7px;top:993px;width:1894px;height:1px;background:#ff0000"></div>
<div class="gl" style="left:7px;top:994px;width:1894px;height:1px;background:#aa0000"></div>
<div class="gl" style="left:7px;top:449px;width:1px;height:546px;background:#ff0000"></div>
<div class="gl" style="left:8px;top:449px;width:1px;height:546px;background:#aa0000"></div>
<div class="gl" style="left:953px;top:449px;width:1px;height:546px;background:#ff0000"></div>
<div class="gl" style="left:954px;top:449px;width:1px;height:546px;background:#aa0000"></div>
<div class="gl" style="left:1899px;top:449px;width:1px;height:546px;background:#ff0000"></div>
<div class="gl" style="left:1900px;top:449px;width:1px;height:546px;background:#aa0000"></div>
<div class="gl" style="left:7px;top:449px;width:1894px;height:1px;background:#ff0000"></div>
<div class="gl" style="left:7px;top:449px;width:1px;height:546px;background:#ff0000"></div>
<div class="gl" style="left:8px;top:994px;width:1893px;height:1px;background:#aa0000"></div>
<div class="gl" style="left:1900px;top:450px;width:1px;height:545px;background:#aa0000"></div>
<svg class="abs" style="left:170px;top:460px;overflow:visible" width="640" height="170" viewBox="0 0 640 170">
<g transform="translate(0,0)">
<path d="M72.2 9.4 V149.6 M132.8 9.4 V149.6 M193.4 9.4 V149.6 M254.0 9.4 V149.6 M314.7 9.4 V149.6 M375.3 9.4 V149.6 M435.9 9.4 V149.6 M496.5 9.4 V149.6 M557.1 9.4 V149.6 M617.7 9.4 V149.6 M12 44.5 H630 M12 79.6 H630 M12 114.7 H630" stroke="#eeeeee" stroke-width="1.6" fill="none"/>
<clipPath id="cpaida09"><rect x="11" y="9" width="620" height="140.7"/></clipPath>
<path clip-path="url(#cpaida09)" d="M11.6 102.7 L12.2 103.5 L12.8 103.8 L13.4 103.1 L14.0 102.7 L14.6 103.3 L15.2 103.6 L15.8 103.9 L16.4 102.8 L17.1 102.7 L17.7 103.8 L18.3 103.6 L18.9 104.2 L19.5 103.9 L20.1 103.4 L20.7 103.3 L21.3 104.7 L21.9 103.3 L22.5 103.1 L23.1 102.9 L23.7 103.5 L24.3 103.5 L24.9 103.3 L25.5 103.5 L26.1 103.6 L26.8 103.8 L27.4 104.1 L28.0 103.6 L28.6 102.6 L29.2 103.9 L29.8 102.8 L30.4 103.5 L31.0 102.8 L31.6 103.6 L32.2 103.2 L32.8 103.7 L33.4 104.9 L34.0 103.6 L34.6 104.0 L35.2 102.9 L35.8 103.5 L36.5 103.9 L37.1 103.6 L37.7 103.8 L38.3 103.7 L38.9 103.1 L39.5 103.9 L40.1 103.2 L40.7 104.6 L41.3 103.4 L41.9 104.0 L42.5 103.7 L43.1 104.2 L43.7 103.4 L44.3 104.2 L44.9 103.6 L45.5 104.3 L46.1 104.0 L46.8 103.8 L47.4 103.3 L48.0 104.1 L48.6 104.0 L49.2 104.6 L49.8 103.6 L50.4 104.0 L51.0 104.0 L51.6 103.9 L52.2 103.9 L52.8 103.9 L53.4 103.5 L54.0 103.3 L54.6 103.6 L55.2 104.1 L55.8 104.6 L56.5 104.3 L57.1 104.4 L57.7 104.2 L58.3 104.2 L58.9 103.9 L59.5 104.2 L60.1 104.8 L60.7 103.7 L61.3 103.5 L61.9 104.9 L62.5 104.0 L63.1 104.4 L63.7 104.3 L64.3 103.3 L64.9 105.1 L65.5 104.8 L66.1 104.0 L66.8 104.3 L67.4 104.0 L68.0 103.5 L68.6 103.9 L69.2 104.2 L69.8 104.5 L70.4 104.3 L71.0 104.0 L71.6 104.7 L72.2 103.6 L72.8 104.4 L73.4 104.6 L74.0 103.9 L74.6 103.1 L75.2 105.9 L75.8 104.2 L76.5 104.3 L77.1 104.8 L77.7 103.6 L78.3 104.1 L78.9 104.4 L79.5 104.0 L80.1 102.9 L80.7 104.5 L81.3 105.3 L81.9 104.6 L82.5 103.7 L83.1 103.9 L83.7 104.2 L84.3 105.4 L84.9 104.4 L85.5 104.2 L86.2 104.9 L86.8 104.1 L87.4 105.1 L88.0 103.8 L88.6 103.9 L89.2 104.5 L89.8 104.9 L90.4 104.5 L91.0 104.4 L91.6 103.3 L92.2 103.9 L92.8 103.9 L93.4 104.0 L94.0 104.5 L94.6 104.1 L95.2 104.6 L95.8 104.3 L96.5 104.1 L97.1 104.3 L97.7 104.5 L98.3 104.7 L98.9 104.1 L99.5 104.2 L100.1 103.6 L100.7 105.1 L101.3 105.0 L101.9 104.2 L102.5 104.1 L103.1 103.7 L103.7 104.4 L104.3 104.5 L104.9 105.4 L105.5 104.5 L106.2 104.0 L106.8 103.2 L107.4 105.1 L108.0 104.5 L108.6 103.6 L109.2 104.5 L109.8 103.6 L110.4 105.7 L111.0 105.0 L111.6 104.7 L112.2 104.3 L112.8 103.4 L113.4 104.4 L114.0 103.7 L114.6 104.8 L115.2 103.4 L115.8 104.0 L116.5 105.1 L117.1 105.3 L117.7 103.9 L118.3 103.7 L118.9 104.9 L119.5 104.9 L120.1 104.0 L120.7 104.2 L121.3 104.2 L121.9 103.9 L122.5 104.2 L123.1 105.2 L123.7 104.9 L124.3 105.6 L124.9 104.5 L125.5 104.5 L126.2 104.1 L126.8 104.5 L127.4 103.9 L128.0 103.7 L128.6 105.0 L129.2 105.3 L129.8 105.0 L130.4 105.3 L131.0 104.8 L131.6 104.3 L132.2 104.7 L132.8 104.5 L133.1 150.5 M168.4 150.5 L168.6 141.3 L169.2 124.1 L169.8 115.5 L170.4 113.1 L171.0 112.8 L171.6 112.3 L172.2 113.7 L172.8 112.8 L173.4 113.1 L174.0 113.6 L174.6 112.1 L175.2 111.2 L175.9 113.2 L176.5 112.2 L177.1 113.6 L177.7 112.9 L178.3 113.4 L178.9 113.2 L179.5 111.1 L180.1 113.2 L180.7 112.2 L181.3 112.1 L181.9 112.3 L182.5 113.2 L183.1 113.3 L183.7 113.4 L184.3 111.4 L184.9 112.2 L185.6 110.9 L186.2 112.6 L186.8 113.1 L187.4 112.1 L188.0 112.8 L188.6 112.8 L189.2 113.4 L189.8 112.1 L190.4 112.1 L191.0 112.1 L191.6 114.0 L192.2 113.5 L192.8 108.6 L193.4 112.8 L194.0 112.8 L194.6 112.8 L195.2 112.5 L195.9 112.4 L196.5 111.7 L197.1 112.2 L197.7 113.9 L198.3 113.1 L198.9 112.7 L199.5 112.5 L200.1 112.7 L200.7 112.9 L201.3 112.2 L201.9 112.8 L202.5 112.8 L203.1 112.1 L203.7 112.1 L204.3 111.9 L204.9 111.9 L205.6 113.3 L206.2 110.9 L206.8 112.5 L207.4 112.2 L208.0 112.2 L208.6 112.7 L209.2 113.5 L209.8 112.7 L210.4 112.6 L211.0 112.2 L211.6 112.6 L212.2 113.3 L212.8 112.4 L213.4 111.8 L214.0 111.7 L214.6 111.9 L215.2 111.6 L215.9 113.5 L216.5 112.9 L217.1 112.5 L217.7 113.7 L218.3 112.2 L218.9 113.2 L219.5 113.3 L220.1 108.5 L220.7 111.5 L221.3 112.0 L221.9 113.3 L222.5 113.6 L223.1 111.8 L223.7 113.4 L224.3 112.4 L224.9 112.4 L225.6 112.3 L226.2 112.4 L226.8 111.3 L227.4 111.9 L228.0 111.8 L228.6 113.0 L229.2 114.2 L229.8 114.6 L230.4 112.4 L231.0 111.4 L231.6 112.4 L232.2 112.0 L232.8 114.1 L233.4 113.1 L234.0 112.1 L234.6 113.4 L235.3 113.1 L235.9 111.5 L236.5 112.3 L237.1 112.5 L237.7 112.7 L238.3 112.8 L238.9 112.4 L239.5 112.8 L240.1 112.2 L240.7 112.0 L241.3 113.8 L241.9 112.9 L242.5 113.0 L243.1 111.5 L243.7 107.1 L244.3 107.4 L244.9 106.1 L245.6 107.1 L246.2 106.1 L246.8 106.3 L247.4 105.8 L248.0 105.8 L248.6 106.1 L249.2 105.0 L249.8 105.8 L250.4 104.4 L251.0 104.1 L251.6 104.7 L252.2 103.6 L252.8 103.8 L253.4 99.5 L254.0 104.1 L254.6 102.4 L255.3 103.3 L255.9 103.8 L256.5 103.2 L257.1 102.3 L257.7 101.9 L258.3 101.8 L258.9 101.2 L259.5 101.4 L260.1 101.3 L260.7 101.1 L261.3 101.5 L261.9 100.6 L262.5 99.8 L263.1 100.8 L263.7 99.5 L264.3 99.6 L264.9 99.5 L265.6 99.2 L266.2 98.7 L266.8 98.8 L267.4 99.9 L268.0 98.3 L268.6 98.4 L269.2 98.9 L269.8 98.5 L270.4 98.4 L271.0 98.3 L271.6 96.7 L272.2 97.1 L272.8 97.4 L273.4 97.4 L274.0 97.7 L274.6 97.1 L275.3 96.6 L275.9 96.5 L276.5 96.2 L277.1 96.3 L277.7 96.4 L278.3 95.7 L278.9 95.3 L279.5 95.1 L280.1 95.9 L280.7 95.8 L281.3 95.5 L281.9 95.3 L282.5 95.1 L283.1 94.6 L283.7 94.7 L284.3 93.7 L285.0 94.0 L285.6 93.5 L286.2 94.1 L286.8 93.3 L287.4 93.4 L288.0 93.4 L288.6 93.8 L289.2 92.5 L289.8 92.3 L290.4 93.0 L291.0 91.9 L291.6 92.5 L292.2 91.8 L292.8 91.9 L293.4 90.9 L294.0 92.0 L294.6 91.2 L295.3 90.8 L295.9 92.2 L296.5 91.3 L297.1 92.1 L297.7 90.8 L298.3 90.3 L298.9 90.4 L299.5 90.9 L300.1 90.0 L300.7 90.1 L301.3 90.0 L301.9 89.1 L302.5 89.5 L303.1 89.1 L303.7 88.6 L304.3 89.5 L305.0 89.3 L305.6 88.9 L306.2 88.2 L306.8 87.6 L307.4 88.7 L308.0 88.3 L308.6 87.3 L309.2 88.0 L309.8 87.2 L310.4 87.8 L311.0 87.7 L311.6 87.7 L312.2 87.5 L312.8 87.4 L313.4 86.6 L314.0 86.8 L314.7 86.6 L315.3 86.6 L315.9 86.8 L316.5 86.8 L317.1 87.2 L317.7 85.0 L318.3 86.3 L318.9 85.9 L319.5 87.0 L320.1 86.2 L320.7 84.8 L321.3 85.7 L321.9 85.1 L322.5 85.7 L323.1 84.6 L323.7 84.9 L324.3 84.8 L325.0 84.6 L325.6 84.3 L326.2 83.5 L326.8 84.6 L327.4 84.8 L328.0 84.2 L328.6 83.7 L329.2 84.2 L329.8 84.4 L330.4 83.9 L331.0 84.0 L331.6 84.6 L332.2 83.3 L332.8 83.5 L333.4 82.8 L334.0 83.4 L334.7 83.3 L335.3 83.1 L335.9 83.2 L336.5 84.4 L337.1 83.4 L337.7 83.4 L338.3 84.5 L338.9 83.3 L339.5 82.4 L340.1 83.4 L340.7 82.7 L341.3 83.9 L341.9 82.4 L342.5 82.7 L343.1 82.2 L343.7 83.0 L344.3 82.4 L345.0 82.8 L345.6 82.6 L346.2 82.4 L346.8 83.1 L347.4 83.1 L348.0 82.6 L348.6 82.1 L349.2 81.9 L349.8 82.5 L350.4 83.6 L351.0 82.1 L351.6 81.9 L352.2 81.9 L352.8 81.6 L353.4 81.6 L354.0 81.9 L354.7 82.7 L355.3 82.0 L355.9 81.6 L356.5 81.0 L357.1 81.9 L357.7 81.7 L358.3 81.1 L358.9 81.1 L359.5 81.6 L360.1 82.1 L360.7 81.8 L361.3 81.5 L361.9 81.2 L362.5 81.5 L363.1 81.3 L363.7 82.3 L364.4 80.6 L365.0 81.0 L365.6 81.7 L366.2 80.9 L366.8 81.7 L367.4 80.9 L368.0 81.0 L368.6 80.7 L369.2 80.2 L369.8 80.4 L370.4 82.0 L371.0 81.1 L371.6 81.1 L372.2 81.3 L372.8 81.0 L373.4 81.2 L374.0 80.6 L374.7 80.6 L375.3 81.1 L375.9 80.5 L376.5 79.9 L377.1 80.5 L377.7 80.3 L378.3 80.8 L378.9 80.2 L379.5 80.0 L380.1 80.3 L380.7 81.2 L381.3 80.4 L381.9 80.5 L382.5 80.4 L383.1 80.5 L383.7 80.8 L384.4 81.0 L385.0 79.4 L385.6 80.9 L386.2 80.2 L386.8 80.0 L387.4 81.4 L388.0 80.1 L388.6 81.1 L389.2 80.6 L389.8 79.6 L390.4 80.3 L391.0 80.4 L391.6 79.9 L392.2 78.8 L392.8 79.8 L393.4 79.8 L394.0 79.4 L394.7 80.8 L395.3 79.7 L395.9 79.6 L396.5 79.7 L397.1 79.4 L397.7 79.4 L398.3 79.8 L398.9 79.9 L399.5 79.4 L400.1 79.6 L400.7 79.0 L401.3 79.9 L401.9 79.3 L402.5 79.7 L403.1 79.2 L403.7 79.4 L404.4 79.7 L405.0 79.0 L405.6 80.8 L406.2 79.6 L406.8 79.5 L407.4 79.2 L408.0 80.4 L408.6 80.2 L409.2 79.7 L409.8 78.9 L410.4 79.3 L411.0 79.8 L411.6 79.3 L412.2 78.9 L412.8 78.9 L413.4 79.1 L414.1 79.5 L414.7 79.1 L415.3 79.5 L415.9 80.8 L416.5 80.3 L417.1 78.9 L417.7 79.6 L418.3 79.5 L418.9 79.3 L419.5 79.9 L420.1 79.2 L420.7 79.2 L421.3 79.2 L421.9 79.3 L422.5 80.0 L423.1 79.7 L423.7 78.7 L424.4 79.1 L425.0 78.9 L425.6 79.7 L426.2 79.4 L426.8 79.8 L427.4 79.3 L428.0 78.3 L428.6 79.5 L429.2 79.4 L429.8 79.5 L430.4 78.6 L431.0 79.3 L431.6 78.9 L432.2 78.9 L432.8 79.4 L433.4 79.4 L434.1 78.8 L434.7 78.3 L435.3 78.0 L435.9 78.9 L436.5 79.7 L437.1 79.1 L437.7 78.0 L438.3 78.7 L438.9 79.4 L439.5 80.0 L440.1 79.7 L440.7 79.3 L441.3 79.2 L441.9 78.6 L442.5 78.9 L443.1 78.9 L443.7 78.7 L444.4 79.1 L445.0 78.9 L445.6 79.2 L446.2 79.8 L446.8 79.4 L447.4 79.2 L448.0 78.9 L448.6 78.3 L449.2 79.0 L449.8 79.3 L450.4 78.5 L451.0 79.6 L451.6 78.9 L452.2 79.2 L452.8 78.9 L453.4 78.4 L454.1 80.1 L454.7 78.5 L455.3 79.6 L455.9 78.8 L456.5 79.3 L457.1 78.7 L457.7 78.9 L458.3 79.6 L458.9 80.2 L459.5 78.8 L460.1 79.2 L460.7 79.7 L461.3 78.9 L461.9 79.6 L462.5 78.9 L463.1 79.6 L463.8 79.5 L464.4 79.9 L465.0 79.5 L465.6 78.7 L466.2 79.7 L466.8 78.8 L467.4 79.7 L468.0 80.1 L468.6 79.7 L469.2 79.1 L469.8 80.0 L470.4 79.5 L471.0 78.8 L471.6 79.3 L472.2 80.2 L472.8 79.3 L473.4 79.5 L474.1 79.3 L474.7 78.7 L475.3 79.2 L475.9 79.7 L476.5 79.6 L477.1 79.5 L477.7 78.5 L478.3 80.2 L478.9 79.9 L479.5 80.1 L480.1 80.3 L480.7 79.4 L481.3 79.3 L481.9 79.8 L482.5 80.5 L483.1 78.8 L483.8 79.6 L484.4 79.3 L485.0 80.0 L485.6 80.4 L486.2 79.6 L486.8 79.1 L487.4 79.8 L488.0 79.6 L488.6 79.0 L489.2 80.2 L489.8 79.5 L490.4 80.1 L491.0 79.2 L491.6 80.4 L492.2 79.1 L492.8 80.4 L493.4 79.0 L494.1 80.6 L494.7 79.7 L495.3 79.1 L495.9 79.8 L496.5 80.1 L497.1 79.4 L497.7 79.7 L498.3 80.1 L498.9 79.9 L499.5 78.7 L500.1 79.8 L500.7 80.2 L501.3 80.2 L501.9 80.6 L502.5 79.7 L503.1 81.4 L503.8 80.5 L504.4 80.3 L505.0 80.7 L505.6 80.6 L506.2 80.2 L506.8 79.9 L507.4 80.7 L508.0 80.4 L508.6 79.3 L509.2 79.7 L509.8 80.5 L510.4 80.3 L511.0 80.4 L511.6 80.6 L512.2 80.4 L512.8 81.1 L513.5 80.1 L514.1 80.2 L514.7 80.6 L515.3 80.8 L515.9 80.8 L516.5 81.2 L517.1 80.2 L517.7 81.1 L518.3 80.7 L518.9 80.0 L519.5 80.5 L520.1 81.6 L520.7 80.9 L521.3 80.3 L521.9 79.4 L522.5 80.2 L523.1 80.3 L523.8 80.7 L524.4 81.8 L525.0 81.0 L525.6 80.8 L526.2 80.2 L526.8 80.1 L527.4 80.6 L528.0 80.5 L528.6 82.1 L529.2 80.6 L529.8 80.5 L530.4 81.4 L531.0 80.9 L531.6 80.2 L532.2 81.5 L532.8 80.7 L533.5 80.2 L534.1 81.1 L534.7 81.2 L535.3 80.8 L535.9 81.3 L536.5 81.4 L537.1 80.5 L537.7 80.0 L538.3 79.8 L538.9 81.0 L539.5 81.7 L540.1 81.6 L540.7 81.8 L541.3 82.0 L541.9 81.1 L542.5 81.7 L543.1 80.4 L543.8 81.5 L544.4 81.4 L545.0 81.2 L545.6 81.0 L546.2 80.7 L546.8 81.3 L547.4 81.9 L548.0 81.1 L548.6 81.6 L549.2 81.0 L549.8 81.5 L550.4 80.9 L551.0 81.6 L551.6 81.3 L552.2 81.6 L552.8 81.2 L553.5 81.0 L554.1 81.4 L554.7 82.1 L555.3 82.4 L555.9 81.5 L556.5 82.1 L557.1 82.1 L557.7 82.0 L558.3 81.1 L558.9 82.0 L559.5 81.4 L560.1 82.5 L560.7 82.4 L561.3 82.3 L561.9 80.8 L562.5 82.4 L563.2 82.5 L563.8 81.5 L564.4 82.7 L565.0 82.3 L565.6 82.2 L566.2 82.0 L566.8 81.9 L567.4 82.2 L568.0 83.7 L568.6 82.6 L569.2 82.6 L569.8 82.2 L570.4 82.3 L571.0 82.4 L571.6 82.2 L572.2 83.1 L572.8 82.6 L573.5 83.2 L574.1 82.2 L574.7 83.3 L575.3 82.9 L575.9 83.3 L576.5 82.9 L577.1 82.6 L577.7 83.6 L578.3 82.9 L578.9 83.0 L579.5 82.7 L580.1 83.3 L580.7 83.0 L581.3 83.4 L581.9 83.5 L582.5 83.0 L583.2 82.7 L583.8 83.6 L584.4 83.9 L585.0 83.8 L585.6 82.9 L586.2 83.9 L586.8 83.8 L587.4 83.8 L588.0 83.9 L588.6 83.5 L589.2 83.9 L589.8 84.2 L590.4 83.6 L591.0 83.1 L591.6 83.8 L592.2 84.0 L592.8 83.0 L593.5 83.7 L594.1 84.3 L594.7 84.0 L595.3 84.1 L595.9 83.5 L596.5 84.6 L597.1 85.0 L597.7 84.1 L598.3 83.8 L598.9 83.6 L599.5 84.7 L600.1 84.3 L600.7 83.9 L601.3 84.9 L601.9 84.7 L602.5 84.7 L603.2 83.5 L603.8 84.3 L604.4 84.7 L605.0 83.8 L605.6 84.9 L606.2 85.2 L606.8 85.0 L607.4 84.2 L608.0 84.2 L608.6 85.1 L609.2 85.1 L609.8 85.2 L610.4 85.3 L611.0 84.6 L611.6 84.5 L612.2 83.8 L612.9 85.1 L613.5 85.9 L614.1 84.6 L614.7 84.6 L615.3 85.2 L615.9 85.0 L616.5 84.2 L617.1 84.5 L617.7 84.4 L618.3 86.0 L618.9 84.6 L619.5 85.4 L620.1 86.0 L620.7 86.0 L621.3 85.8 L621.9 85.9 L622.5 84.5 L623.2 85.0 L623.8 84.8 L624.4 85.0 L625.0 86.5 L625.6 84.4 L626.2 85.5 L626.8 84.7 L627.4 86.0 L628.0 86.0 L628.6 85.1 L629.2 86.4" stroke="#3c3cff" stroke-width="1.3" fill="none" stroke-linejoin="round"/>
<rect x="11.05" y="8.4" width="619.5" height="141.85" fill="none" stroke="#848484" stroke-width="2"/>
</g>
<g transform="translate(0,0)">
<text class="tick" x="7.3" y="14.0" text-anchor="end">8500</text>
<text class="tick" x="7.3" y="49.1" text-anchor="end">8250</text>
<text class="tick" x="7.3" y="84.2" text-anchor="end">8000</text>
<text class="tick" x="7.3" y="119.3" text-anchor="end">7750</text>
<text class="tick" x="7.3" y="154.4" text-anchor="end">7500</text>
<text class="tick" x="12.0" y="165.4" text-anchor="middle">0</text>
<text class="tick" x="72.6" y="165.4" text-anchor="middle">100</text>
<text class="tick" x="133.2" y="165.4" text-anchor="middle">200</text>
<text class="tick" x="193.8" y="165.4" text-anchor="middle">300</text>
<text class="tick" x="254.4" y="165.4" text-anchor="middle">400</text>
<text class="tick" x="315.1" y="165.4" text-anchor="middle">500</text>
<text class="tick" x="375.7" y="165.4" text-anchor="middle">600</text>
<text class="tick" x="436.3" y="165.4" text-anchor="middle">700</text>
<text class="tick" x="496.9" y="165.4" text-anchor="middle">800</text>
<text class="tick" x="557.5" y="165.4" text-anchor="middle">900</text>
<text class="tick" x="618.1" y="165.4" text-anchor="middle">1000</text>
</g>
<g transform="translate(0,0)">
<rect x="523.6" y="18.4" width="14.8" height="10.8" fill="#fffffa" stroke="#ccc" stroke-width="1"/>
<rect x="525.3" y="20" width="11.6" height="7.9" fill="#0000ff"/>
</g>
<text class="leg" x="542.2" y="28" fill="#7e7e7e">aida09 1.8.W</text>
<g transform="translate(0,0)">
<path d="M629.2 -2 L640.2 9 L629.2 20 L618.2 9 Z" fill="#ff0000"/>
</g>
</svg>
<svg class="abs" style="left:1116px;top:460px;overflow:visible" width="640" height="170" viewBox="0 0 640 170">
<g transform="translate(0,0)">
<path d="M72.2 9.4 V149.6 M132.8 9.4 V149.6 M193.4 9.4 V149.6 M254.0 9.4 V149.6 M314.7 9.4 V149.6 M375.3 9.4 V149.6 M435.9 9.4 V149.6 M496.5 9.4 V149.6 M557.1 9.4 V149.6 M617.7 9.4 V149.6 M12 44.5 H630 M12 79.6 H630 M12 114.7 H630" stroke="#eeeeee" stroke-width="1.6" fill="none"/>
<clipPath id="cpaida01"><rect x="11" y="9" width="620" height="140.7"/></clipPath>
<path clip-path="url(#cpaida01)" d="M11.6 93.9 L12.2 94.8 L12.8 94.5 L13.4 94.4 L14.0 95.2 L14.6 94.7 L15.2 94.5 L15.8 95.6 L16.4 94.4 L17.1 94.0 L17.7 94.0 L18.3 94.4 L18.9 95.0 L19.5 95.1 L20.1 95.2 L20.7 95.6 L21.3 95.5 L21.9 95.0 L22.5 95.3 L23.1 95.0 L23.7 94.4 L24.3 95.1 L24.9 94.7 L25.5 94.6 L26.1 95.7 L26.8 95.1 L27.4 94.4 L28.0 94.7 L28.6 95.9 L29.2 94.6 L29.8 95.1 L30.4 95.0 L31.0 95.0 L31.6 95.0 L32.2 94.5 L32.8 94.5 L33.4 94.6 L34.0 94.5 L34.6 95.1 L35.2 95.5 L35.8 94.2 L36.5 95.0 L37.1 94.2 L37.7 94.3 L38.3 94.6 L38.9 94.7 L39.5 94.5 L40.1 93.4 L40.7 95.4 L41.3 94.6 L41.9 94.4 L42.5 95.0 L43.1 94.4 L43.7 94.0 L44.3 94.9 L44.9 94.9 L45.5 94.3 L46.1 95.1 L46.8 94.9 L47.4 94.1 L48.0 95.6 L48.6 94.8 L49.2 94.1 L49.8 94.9 L50.4 94.8 L51.0 95.2 L51.6 94.0 L52.2 95.2 L52.8 95.2 L53.4 95.0 L54.0 95.0 L54.6 95.4 L55.2 95.1 L55.8 94.8 L56.5 94.3 L57.1 95.3 L57.7 95.2 L58.3 94.8 L58.9 94.8 L59.5 95.1 L60.1 93.4 L60.7 94.9 L61.3 93.4 L61.9 94.8 L62.5 95.2 L63.1 95.7 L63.7 94.5 L64.3 94.9 L64.9 94.7 L65.5 93.6 L66.1 95.1 L66.8 94.7 L67.4 94.7 L68.0 94.2 L68.6 94.7 L69.2 94.7 L69.8 95.3 L70.4 94.8 L71.0 96.0 L71.6 94.5 L72.2 94.6 L72.8 94.7 L73.4 94.3 L74.0 95.5 L74.6 95.0 L75.2 94.0 L75.8 94.7 L76.5 95.3 L77.1 94.0 L77.7 94.8 L78.3 94.6 L78.9 95.9 L79.5 94.9 L80.1 94.5 L80.7 94.4 L81.3 95.6 L81.9 94.5 L82.5 95.8 L83.1 93.9 L83.7 94.6 L84.3 94.6 L84.9 94.3 L85.5 94.6 L86.2 95.0 L86.8 94.4 L87.4 94.0 L88.0 95.4 L88.6 95.4 L89.2 94.3 L89.8 94.8 L90.4 93.4 L91.0 95.2 L91.6 94.0 L92.2 94.4 L92.8 95.8 L93.4 94.1 L94.0 94.7 L94.6 94.1 L95.2 93.8 L95.8 94.1 L96.5 94.8 L97.1 94.0 L97.7 94.4 L98.3 95.1 L98.9 94.6 L99.5 94.0 L100.1 95.4 L100.7 94.8 L101.3 95.4 L101.9 94.2 L102.5 95.5 L103.1 94.0 L103.7 93.8 L104.3 94.5 L104.9 94.5 L105.5 94.8 L106.2 94.4 L106.8 95.0 L107.4 95.4 L108.0 94.4 L108.6 94.0 L109.2 94.5 L109.8 95.1 L110.4 95.1 L111.0 94.5 L111.6 94.2 L112.2 94.7 L112.8 95.2 L113.4 94.3 L114.0 95.3 L114.6 94.8 L115.2 94.8 L115.8 94.4 L116.5 95.4 L117.1 94.7 L117.7 93.9 L118.3 95.1 L118.9 94.5 L119.5 95.2 L120.1 94.8 L120.7 94.4 L121.3 94.8 L121.9 94.4 L122.5 94.3 L123.1 94.7 L123.7 95.1 L124.3 94.7 L124.9 94.6 L125.5 94.4 L126.2 95.0 L126.8 94.8 L127.4 95.2 L128.0 94.9 L128.6 95.8 L129.2 93.9 L129.8 94.7 L130.4 95.0 L131.0 95.1 L131.6 93.9 L132.2 94.1 L132.8 94.7 L133.1 150.5 M170.8 150.5 L171.0 135.0 L171.6 112.7 L172.2 97.9 L172.8 91.8 L173.4 89.9 L174.0 89.1 L174.6 88.3 L175.2 88.5 L175.9 88.1 L176.5 89.9 L177.1 88.9 L177.7 88.8 L178.3 88.4 L178.9 89.0 L179.5 88.4 L180.1 77.4 L180.7 89.1 L181.3 88.9 L181.9 89.5 L182.5 89.2 L183.1 90.0 L183.7 89.1 L184.3 89.3 L184.9 89.3 L185.6 88.6 L186.2 90.1 L186.8 88.8 L187.4 88.0 L188.0 90.1 L188.6 89.7 L189.2 88.8 L189.8 89.9 L190.4 89.9 L191.0 89.8 L191.6 88.4 L192.2 89.4 L192.8 88.5 L193.4 88.8 L194.0 88.9 L194.6 88.7 L195.2 89.7 L195.9 88.7 L196.5 89.8 L197.1 89.4 L197.7 88.9 L198.3 89.5 L198.9 89.8 L199.5 90.2 L200.1 89.2 L200.7 90.6 L201.3 89.8 L201.9 90.3 L202.5 85.7 L203.1 88.6 L203.7 90.3 L204.3 89.2 L204.9 89.7 L205.6 90.3 L206.2 88.3 L206.8 89.8 L207.4 90.9 L208.0 90.0 L208.6 89.5 L209.2 89.9 L209.8 89.5 L210.4 90.0 L211.0 90.4 L211.6 89.3 L212.2 89.9 L212.8 89.7 L213.4 90.1 L214.0 90.1 L214.6 88.7 L215.2 90.4 L215.9 90.2 L216.5 88.7 L217.1 89.3 L217.7 88.5 L218.3 89.4 L218.9 89.8 L219.5 88.7 L220.1 89.0 L220.7 88.9 L221.3 89.1 L221.9 89.0 L222.5 88.8 L223.1 90.0 L223.7 89.5 L224.3 89.0 L224.9 90.4 L225.6 89.2 L226.2 90.3 L226.8 88.8 L227.4 90.7 L228.0 89.4 L228.6 89.0 L229.2 90.0 L229.8 88.7 L230.4 88.9 L231.0 89.9 L231.6 89.4 L232.2 90.0 L232.8 89.8 L233.4 89.9 L234.0 83.5 L234.6 90.3 L235.3 89.8 L235.9 90.6 L236.5 90.5 L237.1 88.3 L237.7 88.5 L238.3 91.0 L238.9 89.5 L239.5 90.0 L240.1 89.7 L240.7 94.7 L241.3 91.5 L241.9 89.3 L242.5 89.9 L243.1 89.9 L243.7 89.1 L244.3 89.2 L244.9 93.0 L245.6 89.9 L246.2 90.2 L246.8 88.5 L247.4 88.8 L248.0 91.1 L248.6 89.8 L249.2 90.5 L249.8 89.6 L250.4 89.4 L251.0 91.5 L251.6 89.1 L252.2 89.3 L252.8 90.5 L253.4 90.0 L254.0 88.8 L254.6 90.1 L255.3 90.5 L255.9 88.9 L256.5 89.6 L257.1 84.3 L257.7 84.8 L258.3 82.6 L258.9 83.3 L259.5 83.5 L260.1 83.0 L260.7 82.9 L261.3 83.0 L261.9 83.4 L262.5 82.5 L263.1 83.3 L263.7 83.2 L264.3 83.1 L264.9 83.3 L265.6 82.2 L266.2 82.3 L266.8 82.8 L267.4 82.8 L268.0 82.5 L268.6 81.7 L269.2 81.6 L269.8 81.1 L270.4 81.4 L271.0 81.1 L271.6 81.2 L272.2 81.1 L272.8 81.6 L273.4 81.5 L274.0 81.0 L274.6 80.3 L275.3 80.7 L275.9 80.9 L276.5 81.0 L277.1 80.6 L277.7 80.7 L278.3 79.9 L278.9 80.5 L279.5 80.4 L280.1 79.7 L280.7 79.4 L281.3 80.3 L281.9 79.1 L282.5 79.8 L283.1 79.3 L283.7 79.1 L284.3 79.1 L285.0 78.9 L285.6 79.0 L286.2 79.8 L286.8 79.6 L287.4 78.7 L288.0 78.9 L288.6 79.1 L289.2 78.3 L289.8 79.4 L290.4 78.4 L291.0 78.6 L291.6 77.7 L292.2 77.5 L292.8 77.5 L293.4 77.6 L294.0 78.4 L294.6 77.6 L295.3 78.1 L295.9 77.4 L296.5 77.0 L297.1 77.5 L297.7 77.1 L298.3 76.4 L298.9 77.2 L299.5 77.7 L300.1 76.9 L300.7 76.3 L301.3 76.5 L301.9 76.1 L302.5 76.5 L303.1 76.1 L303.7 76.4 L304.3 76.5 L305.0 77.0 L305.6 75.7 L306.2 75.1 L306.8 76.9 L307.4 76.2 L308.0 75.7 L308.6 76.1 L309.2 75.3 L309.8 75.5 L310.4 75.9 L311.0 75.3 L311.6 75.5 L312.2 75.5 L312.8 75.3 L313.4 75.0 L314.0 75.3 L314.7 75.6 L315.3 75.5 L315.9 74.4 L316.5 75.1 L317.1 73.7 L317.7 73.9 L318.3 74.8 L318.9 74.8 L319.5 75.1 L320.1 73.5 L320.7 74.9 L321.3 74.0 L321.9 74.0 L322.5 74.4 L323.1 74.9 L323.7 73.6 L324.3 73.2 L325.0 73.7 L325.6 73.9 L326.2 74.5 L326.8 74.1 L327.4 73.7 L328.0 73.5 L328.6 73.5 L329.2 74.2 L329.8 72.8 L330.4 73.2 L331.0 73.1 L331.6 74.0 L332.2 73.5 L332.8 73.1 L333.4 73.7 L334.0 74.3 L334.7 73.8 L335.3 72.5 L335.9 73.0 L336.5 73.7 L337.1 72.1 L337.7 72.4 L338.3 72.7 L338.9 73.2 L339.5 72.4 L340.1 72.9 L340.7 72.7 L341.3 72.9 L341.9 72.1 L342.5 71.5 L343.1 71.5 L343.7 72.6 L344.3 73.0 L345.0 72.7 L345.6 71.6 L346.2 71.5 L346.8 72.1 L347.4 71.8 L348.0 71.3 L348.6 71.8 L349.2 71.7 L349.8 72.0 L350.4 72.2 L351.0 72.1 L351.6 72.0 L352.2 72.2 L352.8 71.8 L353.4 71.6 L354.0 71.7 L354.7 72.4 L355.3 71.7 L355.9 72.2 L356.5 72.6 L357.1 72.6 L357.7 70.6 L358.3 71.8 L358.9 72.1 L359.5 71.4 L360.1 71.3 L360.7 70.9 L361.3 71.2 L361.9 71.5 L362.5 70.6 L363.1 71.5 L363.7 71.0 L364.4 71.4 L365.0 70.9 L365.6 71.4 L366.2 71.4 L366.8 71.0 L367.4 71.0 L368.0 71.8 L368.6 71.6 L369.2 70.9 L369.8 71.4 L370.4 70.6 L371.0 70.9 L371.6 69.8 L372.2 70.8 L372.8 71.4 L373.4 70.8 L374.0 71.3 L374.7 70.7 L375.3 71.1 L375.9 70.9 L376.5 70.5 L377.1 72.0 L377.7 70.5 L378.3 70.2 L378.9 70.9 L379.5 71.1 L380.1 71.0 L380.7 70.7 L381.3 71.0 L381.9 71.2 L382.5 71.0 L383.1 70.0 L383.7 71.5 L384.4 70.6 L385.0 69.6 L385.6 71.1 L386.2 70.6 L386.8 70.8 L387.4 71.6 L388.0 70.3 L388.6 70.3 L389.2 70.1 L389.8 70.7 L390.4 70.9 L391.0 70.8 L391.6 70.6 L392.2 69.5 L392.8 70.7 L393.4 71.1 L394.0 70.3 L394.7 70.2 L395.3 70.0 L395.9 70.6 L396.5 69.7 L397.1 71.4 L397.7 70.4 L398.3 70.1 L398.9 69.8 L399.5 70.7 L400.1 70.9 L400.7 70.1 L401.3 70.5 L401.9 70.5 L402.5 70.9 L403.1 70.7 L403.7 71.0 L404.4 69.6 L405.0 71.6 L405.6 70.1 L406.2 69.8 L406.8 69.8 L407.4 70.5 L408.0 70.7 L408.6 71.5 L409.2 70.9 L409.8 69.9 L410.4 70.1 L411.0 70.0 L411.6 69.9 L412.2 70.1 L412.8 69.9 L413.4 70.8 L414.1 70.4 L414.7 70.5 L415.3 70.1 L415.9 69.6 L416.5 70.4 L417.1 70.0 L417.7 71.1 L418.3 70.8 L418.9 69.5 L419.5 69.6 L420.1 69.8 L420.7 70.0 L421.3 70.7 L421.9 70.0 L422.5 70.3 L423.1 69.9 L423.7 69.9 L424.4 70.7 L425.0 70.0 L425.6 71.0 L426.2 70.0 L426.8 70.2 L427.4 70.2 L428.0 70.4 L428.6 71.0 L429.2 69.7 L429.8 69.8 L430.4 69.6 L431.0 71.0 L431.6 70.3 L432.2 70.3 L432.8 70.3 L433.4 69.2 L434.1 70.5 L434.7 70.2 L435.3 70.3 L435.9 70.2 L436.5 70.1 L437.1 70.1 L437.7 69.9 L438.3 70.1 L438.9 70.5 L439.5 69.2 L440.1 70.6 L440.7 70.6 L441.3 69.7 L441.9 70.5 L442.5 70.4 L443.1 70.0 L443.7 71.1 L444.4 70.4 L445.0 70.2 L445.6 69.7 L446.2 71.4 L446.8 70.5 L447.4 70.5 L448.0 70.3 L448.6 71.4 L449.2 70.3 L449.8 71.2 L450.4 70.9 L451.0 70.9 L451.6 70.7 L452.2 71.0 L452.8 70.4 L453.4 69.4 L454.1 69.2 L454.7 71.0 L455.3 69.5 L455.9 71.2 L456.5 71.8 L457.1 69.6 L457.7 70.8 L458.3 70.8 L458.9 70.2 L459.5 69.6 L460.1 70.5 L460.7 71.4 L461.3 70.5 L461.9 70.6 L462.5 70.6 L463.1 70.6 L463.8 70.8 L464.4 71.8 L465.0 70.2 L465.6 69.7 L466.2 71.1 L466.8 70.4 L467.4 70.4 L468.0 70.0 L468.6 70.6 L469.2 70.5 L469.8 71.0 L470.4 70.6 L471.0 70.1 L471.6 71.1 L472.2 70.8 L472.8 69.9 L473.4 70.7 L474.1 71.3 L474.7 70.9 L475.3 70.8 L475.9 71.2 L476.5 70.7 L477.1 70.6 L477.7 71.3 L478.3 70.9 L478.9 70.7 L479.5 71.2 L480.1 71.2 L480.7 71.6 L481.3 71.6 L481.9 71.2 L482.5 71.1 L483.1 70.7 L483.8 71.3 L484.4 71.0 L485.0 71.6 L485.6 71.6 L486.2 71.6 L486.8 71.3 L487.4 71.5 L488.0 72.1 L488.6 72.2 L489.2 71.1 L489.8 70.1 L490.4 71.7 L491.0 70.6 L491.6 71.5 L492.2 71.7 L492.8 72.2 L493.4 71.4 L494.1 71.4 L494.7 71.2 L495.3 71.7 L495.9 70.9 L496.5 71.9 L497.1 71.8 L497.7 72.3 L498.3 71.5 L498.9 71.8 L499.5 71.8 L500.1 71.7 L500.7 71.2 L501.3 71.5 L501.9 71.8 L502.5 72.0 L503.1 72.4 L503.8 71.6 L504.4 72.0 L505.0 72.2 L505.6 72.4 L506.2 72.1 L506.8 72.1 L507.4 71.9 L508.0 72.1 L508.6 72.0 L509.2 71.3 L509.8 71.8 L510.4 71.0 L511.0 72.5 L511.6 72.7 L512.2 72.1 L512.8 72.4 L513.5 72.4 L514.1 72.3 L514.7 73.1 L515.3 72.4 L515.9 72.6 L516.5 72.5 L517.1 73.5 L517.7 71.8 L518.3 72.7 L518.9 72.0 L519.5 72.3 L520.1 72.2 L520.7 73.1 L521.3 72.2 L521.9 72.3 L522.5 72.6 L523.1 72.4 L523.8 72.4 L524.4 73.7 L525.0 72.6 L525.6 72.6 L526.2 73.7 L526.8 73.1 L527.4 73.6 L528.0 72.3 L528.6 73.0 L529.2 73.4 L529.8 73.3 L530.4 73.5 L531.0 73.9 L531.6 73.6 L532.2 73.8 L532.8 73.7 L533.5 73.0 L534.1 73.5 L534.7 74.1 L535.3 73.0 L535.9 73.7 L536.5 73.8 L537.1 74.2 L537.7 72.7 L538.3 74.7 L538.9 72.8 L539.5 73.6 L540.1 74.9 L540.7 73.0 L541.3 74.8 L541.9 73.8 L542.5 74.7 L543.1 74.5 L543.8 73.8 L544.4 73.4 L545.0 73.7 L545.6 73.2 L546.2 73.2 L546.8 74.1 L547.4 73.2 L548.0 74.1 L548.6 73.9 L549.2 73.9 L549.8 73.5 L550.4 73.4 L551.0 74.5 L551.6 73.6 L552.2 73.8 L552.8 74.0 L553.5 74.5 L554.1 75.2 L554.7 75.2 L555.3 74.6 L555.9 74.6 L556.5 74.6 L557.1 74.2 L557.7 74.2 L558.3 73.5 L558.9 74.6 L559.5 74.1 L560.1 74.6 L560.7 75.6 L561.3 74.9 L561.9 75.1 L562.5 75.0 L563.2 74.3 L563.8 74.2 L564.4 73.9 L565.0 74.3 L565.6 74.7 L566.2 75.0 L566.8 75.0 L567.4 74.6 L568.0 74.2 L568.6 74.8 L569.2 75.0 L569.8 73.9 L570.4 75.0 L571.0 74.2 L571.6 74.8 L572.2 74.9 L572.8 74.6 L573.5 74.8 L574.1 75.1 L574.7 74.7 L575.3 75.5 L575.9 75.6 L576.5 75.5 L577.1 74.8 L577.7 75.2 L578.3 75.2 L578.9 75.5 L579.5 75.8 L580.1 75.2 L580.7 75.5 L581.3 76.0 L581.9 75.4 L582.5 76.0 L583.2 75.7 L583.8 75.0 L584.4 75.7 L585.0 75.8 L585.6 75.6 L586.2 76.8 L586.8 75.7 L587.4 75.2 L588.0 75.9 L588.6 75.9 L589.2 76.3 L589.8 77.3 L590.4 76.2 L591.0 76.5 L591.6 75.8 L592.2 75.7 L592.8 75.9 L593.5 76.2 L594.1 76.1 L594.7 76.4 L595.3 76.1 L595.9 75.8 L596.5 76.1 L597.1 76.9 L597.7 76.0 L598.3 77.0 L598.9 77.4 L599.5 76.2 L600.1 77.1 L600.7 77.1 L601.3 75.4 L601.9 77.2 L602.5 77.1 L603.2 76.4 L603.8 80.0 L604.4 75.9 L605.0 77.5 L605.6 77.0 L606.2 76.4 L606.8 77.0 L607.4 76.2 L608.0 77.3 L608.6 77.3 L609.2 77.6 L609.8 77.7 L610.4 76.7 L611.0 77.3 L611.6 76.8 L612.2 75.8 L612.9 77.6 L613.5 77.7 L614.1 77.3 L614.7 78.1 L615.3 77.2 L615.9 76.4 L616.5 77.0 L617.1 77.1 L617.7 77.4 L618.3 77.1 L618.9 76.2 L619.5 76.7 L620.1 77.3 L620.7 78.0 L621.3 77.1 L621.9 76.8 L622.5 77.2 L623.2 77.9 L623.8 78.1 L624.4 77.0 L625.0 77.9 L625.6 78.2 L626.2 78.0 L626.8 77.1 L627.4 77.9 L628.0 77.4 L628.6 77.4 L629.2 78.6" stroke="#3c3cff" stroke-width="1.3" fill="none" stroke-linejoin="round"/>
<rect x="11.05" y="8.4" width="619.5" height="141.85" fill="none" stroke="#848484" stroke-width="2"/>
</g>
<g transform="translate(0,0)">
<text class="tick" x="7.3" y="14.0" text-anchor="end">8500</text>
<text class="tick" x="7.3" y="49.1" text-anchor="end">8250</text>
<text class="tick" x="7.3" y="84.2" text-anchor="end">8000</text>
<text class="tick" x="7.3" y="119.3" text-anchor="end">7750</text>
<text class="tick" x="7.3" y="154.4" text-anchor="end">7500</text>
<text class="tick" x="12.0" y="165.4" text-anchor="middle">0</text>
<text class="tick" x="72.6" y="165.4" text-anchor="middle">100</text>
<text class="tick" x="133.2" y="165.4" text-anchor="middle">200</text>
<text class="tick" x="193.8" y="165.4" text-anchor="middle">300</text>
<text class="tick" x="254.4" y="165.4" text-anchor="middle">400</text>
<text class="tick" x="315.1" y="165.4" text-anchor="middle">500</text>
<text class="tick" x="375.7" y="165.4" text-anchor="middle">600</text>
<text class="tick" x="436.3" y="165.4" text-anchor="middle">700</text>
<text class="tick" x="496.9" y="165.4" text-anchor="middle">800</text>
<text class="tick" x="557.5" y="165.4" text-anchor="middle">900</text>
<text class="tick" x="618.1" y="165.4" text-anchor="middle">1000</text>
</g>
<g transform="translate(0,0)">
<rect x="523.6" y="18.4" width="13.9" height="10.8" fill="#fffffa" stroke="#ccc" stroke-width="1"/>
<rect x="525.3" y="20" width="10.7" height="7.9" fill="#0000ff"/>
</g>
<text class="leg" x="542.2" y="28" fill="#7e7e7e">aida01 1.8.W</text>
<g transform="translate(0,0)">
<path d="M629.2 -2 L640.2 9 L629.2 20 L618.2 9 Z" fill="#ff0000"/>
</g>
</svg>
<svg class="abs" style="left:170px;top:642px;overflow:visible" width="640" height="170" viewBox="0 0 640 170">
<g transform="translate(0,-0.3)">
<path d="M72.2 9.4 V149.6 M132.8 9.4 V149.6 M193.4 9.4 V149.6 M254.0 9.4 V149.6 M314.7 9.4 V149.6 M375.3 9.4 V149.6 M435.9 9.4 V149.6 M496.5 9.4 V149.6 M557.1 9.4 V149.6 M617.7 9.4 V149.6 M12 44.5 H630 M12 79.6 H630 M12 114.7 H630" stroke="#eeeeee" stroke-width="1.6" fill="none"/>
<clipPath id="cpaida10"><rect x="11" y="9" width="620" height="140.7"/></clipPath>
<path clip-path="url(#cpaida10)" d="M11.6 87.3 L12.2 88.1 L12.8 87.0 L13.4 86.5 L14.0 87.5 L14.6 87.7 L15.2 87.6 L15.8 87.7 L16.4 87.4 L17.1 87.1 L17.7 87.1 L18.3 87.3 L18.9 87.3 L19.5 87.9 L20.1 87.8 L20.7 86.8 L21.3 87.8 L21.9 87.5 L22.5 88.1 L23.1 88.3 L23.7 87.8 L24.3 86.6 L24.9 87.9 L25.5 86.8 L26.1 88.3 L26.8 87.2 L27.4 87.5 L28.0 88.5 L28.6 86.7 L29.2 87.6 L29.8 87.0 L30.4 87.3 L31.0 87.2 L31.6 88.0 L32.2 87.5 L32.8 87.8 L33.4 88.0 L34.0 86.8 L34.6 88.3 L35.2 87.5 L35.8 86.8 L36.5 87.3 L37.1 88.1 L37.7 88.2 L38.3 87.3 L38.9 87.7 L39.5 87.8 L40.1 88.2 L40.7 87.6 L41.3 88.2 L41.9 87.3 L42.5 87.4 L43.1 88.1 L43.7 88.1 L44.3 87.7 L44.9 88.1 L45.5 87.9 L46.1 88.2 L46.8 88.4 L47.4 88.0 L48.0 88.2 L48.6 87.6 L49.2 87.5 L49.8 86.6 L50.4 88.0 L51.0 87.8 L51.6 88.1 L52.2 86.9 L52.8 87.6 L53.4 87.6 L54.0 86.9 L54.6 88.3 L55.2 88.5 L55.8 87.2 L56.5 88.1 L57.1 88.8 L57.7 87.3 L58.3 88.4 L58.9 88.7 L59.5 88.9 L60.1 87.2 L60.7 87.4 L61.3 88.0 L61.9 88.6 L62.5 87.3 L63.1 87.6 L63.7 87.4 L64.3 88.5 L64.9 87.7 L65.5 88.3 L66.1 88.3 L66.8 88.6 L67.4 88.2 L68.0 88.2 L68.6 88.6 L69.2 88.3 L69.8 87.4 L70.4 87.8 L71.0 88.5 L71.6 88.1 L72.2 87.9 L72.8 88.2 L73.4 89.3 L74.0 88.0 L74.6 88.3 L75.2 88.3 L75.8 88.0 L76.5 88.7 L77.1 88.5 L77.7 88.3 L78.3 87.4 L78.9 88.8 L79.5 88.5 L80.1 88.1 L80.7 86.8 L81.3 88.1 L81.9 87.5 L82.5 88.1 L83.1 87.9 L83.7 87.8 L84.3 88.7 L84.9 88.3 L85.5 88.8 L86.2 87.7 L86.8 88.1 L87.4 88.9 L88.0 88.4 L88.6 87.9 L89.2 87.8 L89.8 87.9 L90.4 88.2 L91.0 88.6 L91.6 88.3 L92.2 88.7 L92.8 88.7 L93.4 88.3 L94.0 89.0 L94.6 88.7 L95.2 88.2 L95.8 88.2 L96.5 88.3 L97.1 87.9 L97.7 87.6 L98.3 88.4 L98.9 88.1 L99.5 88.7 L100.1 88.1 L100.7 88.4 L101.3 88.5 L101.9 88.1 L102.5 88.5 L103.1 88.0 L103.7 88.2 L104.3 88.8 L104.9 88.6 L105.5 88.4 L106.2 88.0 L106.8 88.8 L107.4 89.5 L108.0 87.3 L108.6 89.0 L109.2 88.6 L109.8 89.0 L110.4 89.1 L111.0 88.0 L111.6 89.4 L112.2 88.2 L112.8 88.4 L113.4 88.8 L114.0 88.5 L114.6 88.7 L115.2 88.3 L115.8 88.0 L116.5 88.5 L117.1 88.0 L117.7 89.2 L118.3 88.7 L118.9 89.3 L119.5 87.9 L120.1 87.5 L120.7 87.4 L121.3 88.4 L121.9 87.9 L122.5 88.8 L123.1 87.9 L123.7 87.9 L124.3 88.8 L124.9 88.4 L125.5 89.0 L126.2 89.1 L126.8 88.8 L127.4 88.0 L128.0 88.2 L128.6 89.8 L129.2 88.6 L129.8 88.8 L130.4 88.8 L131.0 88.7 L131.6 88.6 L132.2 88.4 L132.8 88.4 L133.1 150.5 M172.0 150.5 L172.2 123.2 L172.8 107.6 L173.4 98.8 L174.0 96.1 L174.6 97.1 L175.2 97.3 L175.9 95.7 L176.5 96.4 L177.1 97.9 L177.7 97.2 L178.3 97.1 L178.9 97.6 L179.5 96.7 L180.1 96.6 L180.7 98.0 L181.3 96.7 L181.9 96.8 L182.5 97.3 L183.1 96.9 L183.7 95.9 L184.3 98.3 L184.9 96.8 L185.6 93.6 L186.2 97.3 L186.8 96.2 L187.4 98.1 L188.0 96.8 L188.6 96.3 L189.2 96.9 L189.8 95.3 L190.4 97.3 L191.0 96.4 L191.6 96.8 L192.2 96.3 L192.8 97.5 L193.4 97.3 L194.0 97.8 L194.6 98.3 L195.2 97.2 L195.9 97.1 L196.5 97.3 L197.1 96.4 L197.7 96.6 L198.3 97.6 L198.9 96.4 L199.5 95.6 L200.1 96.8 L200.7 97.3 L201.3 98.2 L201.9 96.6 L202.5 96.4 L203.1 97.2 L203.7 97.0 L204.3 97.3 L204.9 96.7 L205.6 97.3 L206.2 96.7 L206.8 97.9 L207.4 97.4 L208.0 97.6 L208.6 94.8 L209.2 96.1 L209.8 97.2 L210.4 97.2 L211.0 98.0 L211.6 97.9 L212.2 97.2 L212.8 97.2 L213.4 99.5 L214.0 97.2 L214.6 97.4 L215.2 96.9 L215.9 96.5 L216.5 98.2 L217.1 96.6 L217.7 98.5 L218.3 98.2 L218.9 98.5 L219.5 96.7 L220.1 97.8 L220.7 96.3 L221.3 97.1 L221.9 96.2 L222.5 96.8 L223.1 97.0 L223.7 98.1 L224.3 98.2 L224.9 97.1 L225.6 97.2 L226.2 96.7 L226.8 96.5 L227.4 96.1 L228.0 97.3 L228.6 97.9 L229.2 96.9 L229.8 97.7 L230.4 96.6 L231.0 96.7 L231.6 97.1 L232.2 98.1 L232.8 97.1 L233.4 98.1 L234.0 97.2 L234.6 96.7 L235.3 96.0 L235.9 97.2 L236.5 96.8 L237.1 98.2 L237.7 97.9 L238.3 96.3 L238.9 98.2 L239.5 98.0 L240.1 95.6 L240.7 96.8 L241.3 97.8 L241.9 96.4 L242.5 97.1 L243.1 98.0 L243.7 97.8 L244.3 97.9 L244.9 98.1 L245.6 97.0 L246.2 94.4 L246.8 98.0 L247.4 99.2 L248.0 97.5 L248.6 98.1 L249.2 97.9 L249.8 97.6 L250.4 97.9 L251.0 97.9 L251.6 98.3 L252.2 97.9 L252.8 97.8 L253.4 92.9 L254.0 93.2 L254.6 92.2 L255.3 92.2 L255.9 91.8 L256.5 90.5 L257.1 90.8 L257.7 90.5 L258.3 90.0 L258.9 90.2 L259.5 89.4 L260.1 90.1 L260.7 89.5 L261.3 90.1 L261.9 89.5 L262.5 88.4 L263.1 88.7 L263.7 88.6 L264.3 88.0 L264.9 87.9 L265.6 87.3 L266.2 87.2 L266.8 87.5 L267.4 86.9 L268.0 87.5 L268.6 85.6 L269.2 86.1 L269.8 86.1 L270.4 86.8 L271.0 86.4 L271.6 86.0 L272.2 85.9 L272.8 86.0 L273.4 85.3 L274.0 84.6 L274.6 84.6 L275.3 83.9 L275.9 83.9 L276.5 84.0 L277.1 83.4 L277.7 83.5 L278.3 83.0 L278.9 82.3 L279.5 82.0 L280.1 82.9 L280.7 82.3 L281.3 82.5 L281.9 81.8 L282.5 81.6 L283.1 81.6 L283.7 81.1 L284.3 81.8 L285.0 81.4 L285.6 81.0 L286.2 80.1 L286.8 80.2 L287.4 80.4 L288.0 80.7 L288.6 80.0 L289.2 79.8 L289.8 79.9 L290.4 79.6 L291.0 79.3 L291.6 78.6 L292.2 79.7 L292.8 78.9 L293.4 78.5 L294.0 78.5 L294.6 77.7 L295.3 77.4 L295.9 77.2 L296.5 78.1 L297.1 77.1 L297.7 77.7 L298.3 76.9 L298.9 76.4 L299.5 76.8 L300.1 76.6 L300.7 76.5 L301.3 77.5 L301.9 76.6 L302.5 76.1 L303.1 76.6 L303.7 75.9 L304.3 76.5 L305.0 74.9 L305.6 76.1 L306.2 74.9 L306.8 74.9 L307.4 75.2 L308.0 74.4 L308.6 74.0 L309.2 74.4 L309.8 74.3 L310.4 73.5 L311.0 74.6 L311.6 73.6 L312.2 73.5 L312.8 73.6 L313.4 73.5 L314.0 73.9 L314.7 72.1 L315.3 73.0 L315.9 73.3 L316.5 72.8 L317.1 72.6 L317.7 71.9 L318.3 72.5 L318.9 72.0 L319.5 72.2 L320.1 71.5 L320.7 71.7 L321.3 71.7 L321.9 70.9 L322.5 72.0 L323.1 71.3 L323.7 70.6 L324.3 71.0 L325.0 71.1 L325.6 70.7 L326.2 70.3 L326.8 70.5 L327.4 69.8 L328.0 69.6 L328.6 70.9 L329.2 71.0 L329.8 71.0 L330.4 71.0 L331.0 70.5 L331.6 69.2 L332.2 69.3 L332.8 70.0 L333.4 69.1 L334.0 69.0 L334.7 69.1 L335.3 69.2 L335.9 68.2 L336.5 68.8 L337.1 69.0 L337.7 67.6 L338.3 69.1 L338.9 68.8 L339.5 67.9 L340.1 69.2 L340.7 68.4 L341.3 68.3 L341.9 68.7 L342.5 66.6 L343.1 67.8 L343.7 68.2 L344.3 68.3 L345.0 67.5 L345.6 67.3 L346.2 66.9 L346.8 67.0 L347.4 66.7 L348.0 65.8 L348.6 66.6 L349.2 66.3 L349.8 66.4 L350.4 66.4 L351.0 66.3 L351.6 66.5 L352.2 66.4 L352.8 66.1 L353.4 65.9 L354.0 66.1 L354.7 66.0 L355.3 66.0 L355.9 66.7 L356.5 66.0 L357.1 65.6 L357.7 64.7 L358.3 64.9 L358.9 64.3 L359.5 66.0 L360.1 66.0 L360.7 65.2 L361.3 65.1 L361.9 65.5 L362.5 65.4 L363.1 64.2 L363.7 64.9 L364.4 64.8 L365.0 64.2 L365.6 65.5 L366.2 65.1 L366.8 64.4 L367.4 64.6 L368.0 64.3 L368.6 64.3 L369.2 64.3 L369.8 64.9 L370.4 64.4 L371.0 64.1 L371.6 63.9 L372.2 64.4 L372.8 63.7 L373.4 63.3 L374.0 64.0 L374.7 64.8 L375.3 63.6 L375.9 64.0 L376.5 63.8 L377.1 64.4 L377.7 64.0 L378.3 63.1 L378.9 64.6 L379.5 63.6 L380.1 63.1 L380.7 63.3 L381.3 63.5 L381.9 64.0 L382.5 63.3 L383.1 63.0 L383.7 64.0 L384.4 64.1 L385.0 63.1 L385.6 63.3 L386.2 63.4 L386.8 63.0 L387.4 62.7 L388.0 63.6 L388.6 62.6 L389.2 62.2 L389.8 63.3 L390.4 63.6 L391.0 63.4 L391.6 62.6 L392.2 62.8 L392.8 62.4 L393.4 62.6 L394.0 61.6 L394.7 62.4 L395.3 63.5 L395.9 62.2 L396.5 63.6 L397.1 62.8 L397.7 61.7 L398.3 63.1 L398.9 62.2 L399.5 62.9 L400.1 62.5 L400.7 62.4 L401.3 62.4 L401.9 61.8 L402.5 62.1 L403.1 62.3 L403.7 63.3 L404.4 62.1 L405.0 62.5 L405.6 62.6 L406.2 62.9 L406.8 62.2 L407.4 62.4 L408.0 61.8 L408.6 63.5 L409.2 61.4 L409.8 62.3 L410.4 62.0 L411.0 62.2 L411.6 61.8 L412.2 61.8 L412.8 62.5 L413.4 62.5 L414.1 62.0 L414.7 61.9 L415.3 62.1 L415.9 62.0 L416.5 62.3 L417.1 62.4 L417.7 62.3 L418.3 61.3 L418.9 62.0 L419.5 61.5 L420.1 62.3 L420.7 61.9 L421.3 62.2 L421.9 62.0 L422.5 62.6 L423.1 62.8 L423.7 62.2 L424.4 61.4 L425.0 62.1 L425.6 63.1 L426.2 61.8 L426.8 62.1 L427.4 63.4 L428.0 63.0 L428.6 62.5 L429.2 62.3 L429.8 61.5 L430.4 63.0 L431.0 62.6 L431.6 61.3 L432.2 62.1 L432.8 62.1 L433.4 62.2 L434.1 61.9 L434.7 63.4 L435.3 61.8 L435.9 62.9 L436.5 62.5 L437.1 62.2 L437.7 62.5 L438.3 62.6 L438.9 61.8 L439.5 62.1 L440.1 62.9 L440.7 62.7 L441.3 62.5 L441.9 61.7 L442.5 61.5 L443.1 63.0 L443.7 63.0 L444.4 62.6 L445.0 62.5 L445.6 62.1 L446.2 62.6 L446.8 62.9 L447.4 62.7 L448.0 62.1 L448.6 62.5 L449.2 62.1 L449.8 62.3 L450.4 61.8 L451.0 61.2 L451.6 61.8 L452.2 62.4 L452.8 61.9 L453.4 62.6 L454.1 62.0 L454.7 62.4 L455.3 62.1 L455.9 63.0 L456.5 62.1 L457.1 62.3 L457.7 62.8 L458.3 63.0 L458.9 61.7 L459.5 63.0 L460.1 61.7 L460.7 61.8 L461.3 61.8 L461.9 62.7 L462.5 61.7 L463.1 62.5 L463.8 62.4 L464.4 62.1 L465.0 62.4 L465.6 63.2 L466.2 63.0 L466.8 61.8 L467.4 62.3 L468.0 62.0 L468.6 62.1 L469.2 61.9 L469.8 62.4 L470.4 61.7 L471.0 61.5 L471.6 62.2 L472.2 62.3 L472.8 62.7 L473.4 62.5 L474.1 61.7 L474.7 61.6 L475.3 62.3 L475.9 62.2 L476.5 62.4 L477.1 62.7 L477.7 61.0 L478.3 61.8 L478.9 62.3 L479.5 61.5 L480.1 62.9 L480.7 62.0 L481.3 62.3 L481.9 61.9 L482.5 62.2 L483.1 62.2 L483.8 62.3 L484.4 61.4 L485.0 61.1 L485.6 62.1 L486.2 62.5 L486.8 62.0 L487.4 62.1 L488.0 62.7 L488.6 62.6 L489.2 61.8 L489.8 62.4 L490.4 62.2 L491.0 62.4 L491.6 62.3 L492.2 62.7 L492.8 62.4 L493.4 62.6 L494.1 62.5 L494.7 62.4 L495.3 62.2 L495.9 62.7 L496.5 62.8 L497.1 63.4 L497.7 63.8 L498.3 62.3 L498.9 62.3 L499.5 63.2 L500.1 62.5 L500.7 62.8 L501.3 62.1 L501.9 63.1 L502.5 62.1 L503.1 63.3 L503.8 62.4 L504.4 63.0 L505.0 63.4 L505.6 62.5 L506.2 62.9 L506.8 64.0 L507.4 62.3 L508.0 63.1 L508.6 62.0 L509.2 63.2 L509.8 63.0 L510.4 62.5 L511.0 62.5 L511.6 63.8 L512.2 63.5 L512.8 62.6 L513.5 63.6 L514.1 62.8 L514.7 62.9 L515.3 63.5 L515.9 63.3 L516.5 63.6 L517.1 63.9 L517.7 63.1 L518.3 63.7 L518.9 63.6 L519.5 62.7 L520.1 63.9 L520.7 64.1 L521.3 62.9 L521.9 63.5 L522.5 64.1 L523.1 64.1 L523.8 63.5 L524.4 63.6 L525.0 63.6 L525.6 63.2 L526.2 63.9 L526.8 64.9 L527.4 63.2 L528.0 63.9 L528.6 63.5 L529.2 64.7 L529.8 63.2 L530.4 64.5 L531.0 64.3 L531.6 63.7 L532.2 64.0 L532.8 64.2 L533.5 65.0 L534.1 64.4 L534.7 64.8 L535.3 64.8 L535.9 64.4 L536.5 64.4 L537.1 64.3 L537.7 65.2 L538.3 65.1 L538.9 65.0 L539.5 64.2 L540.1 64.4 L540.7 64.9 L541.3 64.5 L541.9 63.9 L542.5 63.9 L543.1 64.9 L543.8 65.1 L544.4 65.0 L545.0 65.5 L545.6 64.0 L546.2 63.9 L546.8 64.9 L547.4 65.3 L548.0 64.5 L548.6 65.1 L549.2 65.1 L549.8 64.8 L550.4 64.6 L551.0 64.9 L551.6 65.0 L552.2 65.4 L552.8 65.0 L553.5 64.6 L554.1 64.6 L554.7 64.9 L555.3 65.4 L555.9 64.8 L556.5 65.0 L557.1 65.5 L557.7 65.4 L558.3 66.3 L558.9 65.5 L559.5 65.6 L560.1 66.4 L560.7 64.4 L561.3 64.5 L561.9 65.0 L562.5 65.4 L563.2 66.0 L563.8 65.8 L564.4 65.2 L565.0 64.7 L565.6 65.7 L566.2 65.4 L566.8 65.0 L567.4 64.9 L568.0 65.9 L568.6 65.4 L569.2 65.7 L569.8 65.5 L570.4 65.2 L571.0 65.4 L571.6 65.3 L572.2 65.6 L572.8 65.3 L573.5 66.0 L574.1 65.2 L574.7 65.9 L575.3 65.8 L575.9 66.1 L576.5 64.5 L577.1 66.1 L577.7 66.0 L578.3 65.6 L578.9 65.7 L579.5 65.7 L580.1 65.2 L580.7 67.2 L581.3 65.8 L581.9 66.2 L582.5 65.4 L583.2 65.7 L583.8 64.8 L584.4 66.0 L585.0 65.6 L585.6 66.0 L586.2 66.3 L586.8 66.8 L587.4 66.1 L588.0 65.6 L588.6 65.9 L589.2 66.5 L589.8 67.1 L590.4 65.0 L591.0 65.6 L591.6 65.9 L592.2 66.2 L592.8 66.6 L593.5 67.0 L594.1 66.6 L594.7 67.1 L595.3 66.1 L595.9 66.0 L596.5 65.6 L597.1 66.1 L597.7 66.8 L598.3 66.5 L598.9 67.5 L599.5 66.4 L600.1 66.1 L600.7 66.8 L601.3 65.6 L601.9 67.0 L602.5 66.8 L603.2 66.0 L603.8 66.9 L604.4 66.8 L605.0 67.3 L605.6 66.6 L606.2 66.5 L606.8 66.8 L607.4 66.7 L608.0 66.3 L608.6 67.3 L609.2 67.4 L609.8 66.5 L610.4 66.6 L611.0 66.4 L611.6 66.7 L612.2 66.6 L612.9 67.0 L613.5 67.4 L614.1 67.8 L614.7 66.6 L615.3 66.7 L615.9 66.5 L616.5 67.1 L617.1 67.5 L617.7 66.7 L618.3 67.2 L618.9 66.7 L619.5 66.5 L620.1 67.0 L620.7 67.7 L621.3 67.1 L621.9 66.4 L622.5 66.8 L623.2 67.2 L623.8 68.4 L624.4 66.8 L625.0 68.8 L625.6 67.9 L626.2 68.1 L626.8 68.0 L627.4 66.3 L628.0 67.7 L628.6 67.7 L629.2 67.8" stroke="#3c3cff" stroke-width="1.3" fill="none" stroke-linejoin="round"/>
<rect x="11.05" y="8.4" width="619.5" height="141.85" fill="none" stroke="#848484" stroke-width="2"/>
</g>
<g transform="translate(0,-1)">
<text class="tick" x="7.3" y="14.0" text-anchor="end">8500</text>
<text class="tick" x="7.3" y="49.1" text-anchor="end">8250</text>
<text class="tick" x="7.3" y="84.2" text-anchor="end">8000</text>
<text class="tick" x="7.3" y="119.3" text-anchor="end">7750</text>
<text class="tick" x="7.3" y="154.4" text-anchor="end">7500</text>
<text class="tick" x="12.0" y="166.4" text-anchor="middle">0</text>
<text class="tick" x="72.6" y="166.4" text-anchor="middle">100</text>
<text class="tick" x="133.2" y="166.4" text-anchor="middle">200</text>
<text class="tick" x="193.8" y="166.4" text-anchor="middle">300</text>
<text class="tick" x="254.4" y="166.4" text-anchor="middle">400</text>
<text class="tick" x="315.1" y="166.4" text-anchor="middle">500</text>
<text class="tick" x="375.7" y="166.4" text-anchor="middle">600</text>
<text class="tick" x="436.3" y="166.4" text-anchor="middle">700</text>
<text class="tick" x="496.9" y="166.4" text-anchor="middle">800</text>
<text class="tick" x="557.5" y="166.4" text-anchor="middle">900</text>
<text class="tick" x="618.1" y="166.4" text-anchor="middle">1000</text>
</g>
<g transform="translate(0,-1)">
<rect x="523.6" y="18.4" width="14.8" height="10.8" fill="#fffffa" stroke="#ccc" stroke-width="1"/>
<rect x="525.3" y="20" width="11.6" height="7.9" fill="#0000ff"/>
</g>
<text class="leg" x="542.2" y="28" fill="#7e7e7e">aida10 1.8.W</text>
<g transform="translate(0,-0.3)">
<path d="M629.2 -2 L640.2 9 L629.2 20 L618.2 9 Z" fill="#ff0000"/>
</g>
</svg>
<svg class="abs" style="left:1116px;top:642px;overflow:visible" width="640" height="170" viewBox="0 0 640 170">
<g transform="translate(0,-0.3)">
<path d="M72.2 9.4 V149.6 M132.8 9.4 V149.6 M193.4 9.4 V149.6 M254.0 9.4 V149.6 M314.7 9.4 V149.6 M375.3 9.4 V149.6 M435.9 9.4 V149.6 M496.5 9.4 V149.6 M557.1 9.4 V149.6 M617.7 9.4 V149.6 M12 44.5 H630 M12 79.6 H630 M12 114.7 H630" stroke="#eeeeee" stroke-width="1.6" fill="none"/>
<clipPath id="cpaida11"><rect x="11" y="9" width="620" height="140.7"/></clipPath>
<path clip-path="url(#cpaida11)" d="M11.6 106.9 L12.2 106.8 L12.8 105.7 L13.4 105.4 L14.0 106.3 L14.6 106.7 L15.2 106.3 L15.8 105.6 L16.4 106.1 L17.1 107.1 L17.7 105.7 L18.3 106.9 L18.9 106.6 L19.5 106.6 L20.1 106.7 L20.7 106.1 L21.3 106.3 L21.9 107.3 L22.5 106.2 L23.1 106.2 L23.7 105.7 L24.3 106.1 L24.9 106.7 L25.5 107.0 L26.1 106.7 L26.8 106.7 L27.4 106.7 L28.0 106.5 L28.6 106.9 L29.2 106.3 L29.8 106.9 L30.4 106.4 L31.0 105.6 L31.6 105.8 L32.2 106.3 L32.8 106.2 L33.4 105.8 L34.0 106.0 L34.6 106.5 L35.2 106.6 L35.8 106.8 L36.5 106.0 L37.1 106.6 L37.7 106.9 L38.3 106.6 L38.9 107.3 L39.5 106.2 L40.1 106.4 L40.7 106.5 L41.3 106.2 L41.9 106.4 L42.5 106.5 L43.1 106.4 L43.7 106.2 L44.3 106.2 L44.9 106.4 L45.5 105.7 L46.1 106.5 L46.8 105.9 L47.4 106.3 L48.0 105.9 L48.6 106.5 L49.2 106.3 L49.8 106.3 L50.4 106.1 L51.0 106.5 L51.6 107.2 L52.2 105.6 L52.8 106.7 L53.4 106.6 L54.0 106.3 L54.6 105.8 L55.2 107.2 L55.8 106.5 L56.5 106.9 L57.1 106.3 L57.7 106.1 L58.3 107.0 L58.9 106.8 L59.5 106.3 L60.1 106.4 L60.7 106.8 L61.3 106.1 L61.9 106.1 L62.5 106.5 L63.1 107.0 L63.7 106.9 L64.3 106.6 L64.9 107.1 L65.5 106.4 L66.1 106.2 L66.8 107.6 L67.4 106.2 L68.0 106.8 L68.6 106.8 L69.2 106.6 L69.8 106.6 L70.4 106.8 L71.0 106.8 L71.6 106.2 L72.2 106.5 L72.8 107.2 L73.4 106.9 L74.0 106.3 L74.6 106.5 L75.2 106.0 L75.8 105.9 L76.5 106.3 L77.1 107.3 L77.7 106.2 L78.3 105.6 L78.9 106.5 L79.5 106.2 L80.1 106.9 L80.7 107.1 L81.3 106.4 L81.9 106.6 L82.5 106.1 L83.1 107.1 L83.7 106.2 L84.3 106.6 L84.9 107.7 L85.5 106.1 L86.2 106.6 L86.8 106.5 L87.4 106.8 L88.0 106.8 L88.6 107.3 L89.2 106.8 L89.8 106.8 L90.4 106.0 L91.0 106.8 L91.6 105.9 L92.2 107.2 L92.8 106.5 L93.4 107.0 L94.0 106.3 L94.6 106.7 L95.2 106.6 L95.8 106.8 L96.5 106.5 L97.1 106.3 L97.7 106.4 L98.3 106.3 L98.9 106.1 L99.5 106.0 L100.1 105.9 L100.7 107.5 L101.3 106.2 L101.9 106.0 L102.5 107.1 L103.1 106.7 L103.7 106.5 L104.3 107.1 L104.9 107.5 L105.5 106.2 L106.2 107.3 L106.8 106.9 L107.4 107.2 L108.0 106.3 L108.6 107.4 L109.2 107.2 L109.8 105.3 L110.4 107.2 L111.0 107.3 L111.6 105.9 L112.2 106.8 L112.8 106.5 L113.4 106.7 L114.0 106.2 L114.6 106.9 L115.2 107.0 L115.8 106.6 L116.5 106.6 L117.1 105.8 L117.7 106.9 L118.3 106.0 L118.9 106.6 L119.5 106.2 L120.1 107.9 L120.7 106.6 L121.3 107.4 L121.9 106.6 L122.5 106.6 L123.1 107.0 L123.7 106.6 L124.3 107.8 L124.9 106.6 L125.5 107.4 L126.2 106.1 L126.8 106.2 L127.4 107.0 L128.0 106.0 L128.6 107.6 L129.2 106.9 L129.8 106.7 L130.4 107.5 L131.0 106.4 L131.6 106.3 L132.2 105.4 L132.8 105.7 L133.1 150.5 M168.4 150.5 L168.6 130.3 L169.2 115.9 L169.8 110.3 L170.4 107.8 L171.0 107.3 L171.6 105.8 L172.2 106.4 L172.8 106.0 L173.4 107.5 L174.0 107.8 L174.6 106.9 L175.2 107.1 L175.9 107.2 L176.5 107.6 L177.1 106.4 L177.7 106.3 L178.3 107.6 L178.9 107.4 L179.5 107.4 L180.1 107.1 L180.7 107.6 L181.3 107.4 L181.9 106.6 L182.5 108.3 L183.1 107.8 L183.7 106.9 L184.3 107.0 L184.9 106.6 L185.6 106.1 L186.2 106.3 L186.8 108.4 L187.4 106.6 L188.0 107.3 L188.6 107.0 L189.2 106.0 L189.8 106.9 L190.4 106.6 L191.0 106.3 L191.6 107.9 L192.2 106.3 L192.8 107.7 L193.4 105.9 L194.0 107.3 L194.6 106.6 L195.2 107.8 L195.9 107.4 L196.5 106.5 L197.1 107.6 L197.7 108.0 L198.3 108.1 L198.9 108.2 L199.5 106.9 L200.1 108.7 L200.7 106.7 L201.3 107.0 L201.9 106.0 L202.5 107.0 L203.1 106.1 L203.7 107.2 L204.3 101.2 L204.9 108.5 L205.6 107.7 L206.2 108.3 L206.8 108.0 L207.4 107.3 L208.0 107.5 L208.6 107.3 L209.2 105.8 L209.8 106.3 L210.4 106.9 L211.0 107.9 L211.6 106.2 L212.2 107.3 L212.8 106.8 L213.4 107.7 L214.0 107.7 L214.6 106.4 L215.2 106.4 L215.9 108.3 L216.5 108.0 L217.1 107.2 L217.7 107.8 L218.3 107.2 L218.9 107.6 L219.5 106.9 L220.1 107.6 L220.7 108.4 L221.3 108.3 L221.9 108.1 L222.5 107.3 L223.1 107.9 L223.7 106.9 L224.3 107.0 L224.9 107.3 L225.6 106.4 L226.2 107.4 L226.8 106.0 L227.4 108.4 L228.0 107.9 L228.6 107.5 L229.2 106.7 L229.8 106.8 L230.4 107.0 L231.0 106.1 L231.6 107.0 L232.2 106.6 L232.8 107.9 L233.4 108.2 L234.0 108.3 L234.6 106.3 L235.3 106.3 L235.9 108.3 L236.5 104.9 L237.1 108.1 L237.7 107.8 L238.3 107.5 L238.9 108.8 L239.5 107.9 L240.1 107.8 L240.7 106.6 L241.3 107.4 L241.9 108.3 L242.5 107.7 L243.1 108.0 L243.7 107.2 L244.3 107.8 L244.9 106.9 L245.6 107.2 L246.2 108.1 L246.8 108.6 L247.4 107.1 L248.0 107.2 L248.6 107.2 L249.2 107.2 L249.8 107.4 L250.4 108.0 L251.0 107.6 L251.6 107.3 L252.2 107.7 L252.8 106.1 L253.4 107.2 L254.0 103.7 L254.6 102.0 L255.3 102.1 L255.9 102.4 L256.5 102.7 L257.1 101.9 L257.7 101.4 L258.3 102.5 L258.9 100.5 L259.5 101.1 L260.1 101.0 L260.7 100.1 L261.3 101.8 L261.9 102.0 L262.5 100.1 L263.1 100.5 L263.7 94.5 L264.3 100.8 L264.9 100.3 L265.6 118.5 L266.2 100.4 L266.8 99.9 L267.4 99.9 L268.0 100.4 L268.6 99.7 L269.2 99.8 L269.8 99.3 L270.4 99.5 L271.0 99.8 L271.6 98.9 L272.2 98.5 L272.8 98.2 L273.4 99.0 L274.0 97.9 L274.6 98.4 L275.3 99.3 L275.9 98.0 L276.5 98.6 L277.1 97.6 L277.7 97.4 L278.3 97.6 L278.9 96.8 L279.5 95.8 L280.1 96.9 L280.7 96.4 L281.3 96.7 L281.9 97.5 L282.5 96.7 L283.1 95.5 L283.7 96.3 L284.3 95.0 L285.0 94.7 L285.6 96.7 L286.2 95.1 L286.8 94.3 L287.4 95.2 L288.0 95.0 L288.6 95.2 L289.2 94.7 L289.8 94.6 L290.4 95.0 L291.0 94.3 L291.6 93.9 L292.2 94.3 L292.8 93.7 L293.4 94.4 L294.0 93.7 L294.6 93.5 L295.3 93.2 L295.9 93.6 L296.5 93.7 L297.1 92.9 L297.7 91.8 L298.3 93.1 L298.9 92.2 L299.5 92.8 L300.1 92.0 L300.7 92.4 L301.3 92.0 L301.9 91.7 L302.5 91.3 L303.1 91.8 L303.7 91.9 L304.3 90.9 L305.0 90.4 L305.6 91.6 L306.2 92.5 L306.8 90.9 L307.4 91.1 L308.0 90.6 L308.6 90.4 L309.2 91.7 L309.8 90.0 L310.4 90.9 L311.0 90.3 L311.6 90.9 L312.2 91.3 L312.8 90.5 L313.4 90.2 L314.0 90.8 L314.7 90.0 L315.3 89.1 L315.9 90.6 L316.5 89.6 L317.1 89.9 L317.7 90.8 L318.3 90.1 L318.9 89.7 L319.5 90.3 L320.1 88.9 L320.7 88.4 L321.3 88.6 L321.9 89.1 L322.5 89.1 L323.1 88.5 L323.7 89.9 L324.3 89.1 L325.0 88.7 L325.6 88.2 L326.2 88.4 L326.8 88.5 L327.4 88.1 L328.0 89.4 L328.6 88.9 L329.2 88.3 L329.8 87.9 L330.4 86.9 L331.0 88.2 L331.6 87.3 L332.2 88.1 L332.8 87.6 L333.4 86.7 L334.0 87.3 L334.7 87.1 L335.3 87.0 L335.9 87.0 L336.5 87.0 L337.1 86.8 L337.7 87.3 L338.3 87.0 L338.9 86.6 L339.5 86.5 L340.1 86.4 L340.7 86.3 L341.3 86.3 L341.9 86.4 L342.5 86.1 L343.1 85.2 L343.7 86.1 L344.3 85.6 L345.0 85.9 L345.6 87.1 L346.2 86.3 L346.8 84.5 L347.4 84.8 L348.0 86.1 L348.6 85.1 L349.2 84.6 L349.8 84.5 L350.4 85.2 L351.0 84.8 L351.6 85.1 L352.2 84.9 L352.8 85.0 L353.4 84.7 L354.0 84.4 L354.7 85.1 L355.3 85.5 L355.9 84.2 L356.5 84.5 L357.1 85.5 L357.7 83.9 L358.3 83.8 L358.9 84.6 L359.5 84.7 L360.1 84.1 L360.7 84.6 L361.3 83.9 L361.9 84.0 L362.5 83.8 L363.1 83.9 L363.7 83.7 L364.4 84.4 L365.0 83.9 L365.6 84.3 L366.2 83.3 L366.8 82.9 L367.4 83.0 L368.0 83.0 L368.6 83.4 L369.2 82.9 L369.8 83.2 L370.4 83.3 L371.0 82.4 L371.6 82.2 L372.2 83.6 L372.8 82.5 L373.4 83.8 L374.0 82.6 L374.7 82.0 L375.3 82.1 L375.9 82.2 L376.5 83.8 L377.1 81.6 L377.7 81.3 L378.3 81.9 L378.9 82.4 L379.5 83.4 L380.1 82.8 L380.7 81.7 L381.3 83.0 L381.9 82.8 L382.5 81.7 L383.1 82.3 L383.7 82.2 L384.4 81.9 L385.0 81.7 L385.6 81.5 L386.2 82.0 L386.8 81.5 L387.4 82.1 L388.0 82.0 L388.6 80.8 L389.2 81.8 L389.8 81.4 L390.4 81.8 L391.0 81.2 L391.6 81.9 L392.2 81.7 L392.8 81.7 L393.4 81.5 L394.0 80.5 L394.7 81.1 L395.3 81.6 L395.9 81.5 L396.5 81.3 L397.1 80.9 L397.7 80.8 L398.3 80.1 L398.9 79.9 L399.5 80.6 L400.1 81.1 L400.7 80.5 L401.3 80.3 L401.9 80.5 L402.5 81.2 L403.1 80.2 L403.7 80.4 L404.4 80.6 L405.0 80.9 L405.6 80.6 L406.2 80.0 L406.8 80.0 L407.4 79.7 L408.0 80.1 L408.6 80.7 L409.2 80.2 L409.8 79.9 L410.4 79.5 L411.0 79.8 L411.6 80.4 L412.2 80.3 L412.8 80.1 L413.4 80.3 L414.1 80.5 L414.7 79.9 L415.3 80.1 L415.9 78.8 L416.5 80.0 L417.1 79.5 L417.7 79.8 L418.3 79.1 L418.9 79.4 L419.5 78.9 L420.1 79.4 L420.7 78.9 L421.3 79.9 L421.9 79.2 L422.5 79.4 L423.1 79.0 L423.7 79.2 L424.4 78.9 L425.0 78.8 L425.6 79.4 L426.2 78.8 L426.8 78.5 L427.4 78.8 L428.0 80.1 L428.6 79.5 L429.2 79.1 L429.8 79.0 L430.4 79.0 L431.0 79.0 L431.6 79.9 L432.2 79.5 L432.8 78.8 L433.4 77.8 L434.1 78.2 L434.7 78.8 L435.3 78.4 L435.9 78.8 L436.5 78.4 L437.1 78.7 L437.7 78.7 L438.3 78.2 L438.9 77.8 L439.5 78.2 L440.1 78.0 L440.7 77.9 L441.3 78.3 L441.9 78.9 L442.5 78.1 L443.1 78.0 L443.7 77.6 L444.4 78.3 L445.0 78.2 L445.6 78.2 L446.2 78.8 L446.8 78.2 L447.4 78.5 L448.0 77.8 L448.6 78.1 L449.2 77.5 L449.8 78.3 L450.4 78.6 L451.0 77.4 L451.6 77.4 L452.2 77.9 L452.8 77.7 L453.4 78.1 L454.1 76.3 L454.7 77.3 L455.3 77.9 L455.9 77.7 L456.5 77.0 L457.1 77.9 L457.7 77.5 L458.3 77.5 L458.9 77.3 L459.5 77.3 L460.1 77.7 L460.7 76.6 L461.3 76.0 L461.9 77.6 L462.5 76.0 L463.1 77.3 L463.8 77.2 L464.4 77.3 L465.0 76.6 L465.6 77.4 L466.2 76.9 L466.8 76.8 L467.4 76.9 L468.0 76.6 L468.6 77.8 L469.2 76.6 L469.8 76.9 L470.4 76.7 L471.0 77.0 L471.6 76.9 L472.2 76.7 L472.8 76.9 L473.4 76.9 L474.1 76.9 L474.7 77.3 L475.3 76.7 L475.9 76.7 L476.5 77.0 L477.1 76.6 L477.7 76.9 L478.3 77.0 L478.9 75.5 L479.5 76.7 L480.1 76.4 L480.7 75.8 L481.3 76.0 L481.9 75.9 L482.5 77.1 L483.1 77.1 L483.8 76.5 L484.4 76.4 L485.0 75.9 L485.6 77.5 L486.2 77.2 L486.8 76.6 L487.4 76.0 L488.0 76.3 L488.6 76.0 L489.2 75.7 L489.8 75.8 L490.4 75.9 L491.0 76.0 L491.6 76.5 L492.2 75.8 L492.8 76.5 L493.4 76.3 L494.1 76.7 L494.7 76.9 L495.3 77.3 L495.9 76.6 L496.5 75.9 L497.1 76.0 L497.7 77.4 L498.3 75.5 L498.9 76.1 L499.5 76.7 L500.1 76.0 L500.7 76.3 L501.3 76.9 L501.9 76.4 L502.5 76.0 L503.1 76.3 L503.8 76.1 L504.4 76.3 L505.0 76.2 L505.6 75.8 L506.2 75.9 L506.8 76.0 L507.4 75.8 L508.0 75.6 L508.6 76.3 L509.2 74.7 L509.8 75.7 L510.4 76.3 L511.0 76.0 L511.6 75.2 L512.2 75.3 L512.8 76.8 L513.5 76.1 L514.1 75.7 L514.7 75.8 L515.3 75.6 L515.9 75.9 L516.5 75.3 L517.1 75.8 L517.7 75.6 L518.3 75.8 L518.9 76.1 L519.5 74.7 L520.1 75.6 L520.7 75.7 L521.3 75.7 L521.9 75.6 L522.5 75.8 L523.1 76.1 L523.8 75.3 L524.4 75.6 L525.0 75.9 L525.6 75.4 L526.2 76.0 L526.8 75.2 L527.4 76.1 L528.0 75.6 L528.6 76.2 L529.2 76.1 L529.8 75.0 L530.4 75.9 L531.0 75.7 L531.6 75.4 L532.2 75.2 L532.8 75.6 L533.5 75.2 L534.1 75.4 L534.7 75.4 L535.3 75.4 L535.9 75.2 L536.5 74.6 L537.1 75.4 L537.7 74.0 L538.3 75.4 L538.9 75.2 L539.5 75.2 L540.1 75.0 L540.7 75.4 L541.3 75.5 L541.9 75.0 L542.5 75.0 L543.1 74.8 L543.8 74.7 L544.4 75.5 L545.0 75.2 L545.6 75.9 L546.2 74.5 L546.8 74.7 L547.4 75.3 L548.0 75.0 L548.6 75.4 L549.2 74.8 L549.8 75.8 L550.4 75.1 L551.0 75.4 L551.6 75.7 L552.2 74.6 L552.8 75.0 L553.5 74.6 L554.1 75.6 L554.7 74.3 L555.3 74.9 L555.9 74.8 L556.5 75.6 L557.1 75.9 L557.7 75.1 L558.3 76.0 L558.9 75.4 L559.5 74.4 L560.1 75.0 L560.7 74.6 L561.3 75.5 L561.9 75.3 L562.5 75.2 L563.2 74.6 L563.8 74.9 L564.4 74.4 L565.0 75.0 L565.6 75.7 L566.2 74.9 L566.8 75.7 L567.4 75.1 L568.0 74.9 L568.6 75.3 L569.2 74.3 L569.8 75.8 L570.4 75.1 L571.0 74.4 L571.6 75.3 L572.2 74.5 L572.8 75.4 L573.5 75.6 L574.1 75.4 L574.7 74.3 L575.3 74.8 L575.9 75.5 L576.5 75.2 L577.1 75.2 L577.7 76.1 L578.3 75.4 L578.9 74.8 L579.5 74.3 L580.1 74.6 L580.7 74.2 L581.3 74.5 L581.9 74.9 L582.5 74.2 L583.2 74.9 L583.8 74.6 L584.4 75.1 L585.0 74.2 L585.6 74.4 L586.2 74.8 L586.8 75.1 L587.4 74.8 L588.0 73.5 L588.6 74.7 L589.2 73.9 L589.8 74.7 L590.4 74.3 L591.0 74.3 L591.6 74.5 L592.2 75.0 L592.8 74.7 L593.5 75.0 L594.1 74.7 L594.7 74.5 L595.3 75.3 L595.9 75.7 L596.5 74.3 L597.1 74.7 L597.7 74.0 L598.3 74.7 L598.9 74.2 L599.5 75.3 L600.1 74.9 L600.7 74.8 L601.3 75.2 L601.9 74.8 L602.5 73.3 L603.2 75.4 L603.8 75.4 L604.4 74.6 L605.0 75.1 L605.6 74.8 L606.2 73.8 L606.8 73.7 L607.4 75.2 L608.0 74.9 L608.6 75.3 L609.2 75.4 L609.8 74.4 L610.4 74.8 L611.0 74.7 L611.6 74.8 L612.2 74.6 L612.9 74.1 L613.5 74.5 L614.1 73.4 L614.7 74.5 L615.3 74.1 L615.9 73.9 L616.5 74.5 L617.1 74.4 L617.7 74.4 L618.3 73.9 L618.9 73.9 L619.5 74.1 L620.1 74.1 L620.7 74.0 L621.3 73.6 L621.9 74.2 L622.5 73.8 L623.2 74.1 L623.8 73.6 L624.4 72.9 L625.0 74.1 L625.6 74.3 L626.2 74.0 L626.8 74.5 L627.4 74.1 L628.0 73.9 L628.6 74.6 L629.2 74.2" stroke="#3c3cff" stroke-width="1.3" fill="none" stroke-linejoin="round"/>
<rect x="11.05" y="8.4" width="619.5" height="141.85" fill="none" stroke="#848484" stroke-width="2"/>
</g>
<g transform="translate(0,-1)">
<text class="tick" x="7.3" y="14.0" text-anchor="end">8500</text>
<text class="tick" x="7.3" y="49.1" text-anchor="end">8250</text>
<text class="tick" x="7.3" y="84.2" text-anchor="end">8000</text>
<text class="tick" x="7.3" y="119.3" text-anchor="end">7750</text>
<text class="tick" x="7.3" y="154.4" text-anchor="end">7500</text>
<text class="tick" x="12.0" y="166.4" text-anchor="middle">0</text>
<text class="tick" x="72.6" y="166.4" text-anchor="middle">100</text>
<text class="tick" x="133.2" y="166.4" text-anchor="middle">200</text>
<text class="tick" x="193.8" y="166.4" text-anchor="middle">300</text>
<text class="tick" x="254.4" y="166.4" text-anchor="middle">400</text>
<text class="tick" x="315.1" y="166.4" text-anchor="middle">500</text>
<text class="tick" x="375.7" y="166.4" text-anchor="middle">600</text>
<text class="tick" x="436.3" y="166.4" text-anchor="middle">700</text>
<text class="tick" x="496.9" y="166.4" text-anchor="middle">800</text>
<text class="tick" x="557.5" y="166.4" text-anchor="middle">900</text>
<text class="tick" x="618.1" y="166.4" text-anchor="middle">1000</text>
</g>
<g transform="translate(0,-1)">
<rect x="523.6" y="18.4" width="13.9" height="10.8" fill="#fffffa" stroke="#ccc" stroke-width="1"/>
<rect x="525.3" y="20" width="10.7" height="7.9" fill="#0000ff"/>
</g>
<text class="leg" x="542.2" y="28" fill="#7e7e7e">aida11 1.8.W</text>
<g transform="translate(0,-0.3)">
<path d="M629.2 -2 L640.2 9 L629.2 20 L618.2 9 Z" fill="#ff0000"/>
</g>
</svg>
<svg class="abs" style="left:170px;top:823px;overflow:visible" width="640" height="170" viewBox="0 0 640 170">
<g transform="translate(0,-0.3)">
<path d="M72.2 9.4 V149.6 M132.8 9.4 V149.6 M193.4 9.4 V149.6 M254.0 9.4 V149.6 M314.7 9.4 V149.6 M375.3 9.4 V149.6 M435.9 9.4 V149.6 M496.5 9.4 V149.6 M557.1 9.4 V149.6 M617.7 9.4 V149.6 M12 44.5 H630 M12 79.6 H630 M12 114.7 H630" stroke="#eeeeee" stroke-width="1.6" fill="none"/>
<clipPath id="cpaida03"><rect x="11" y="9" width="620" height="140.7"/></clipPath>
<path clip-path="url(#cpaida03)" d="M11.6 106.1 L12.2 106.0 L12.8 106.0 L13.4 105.7 L14.0 106.1 L14.6 106.0 L15.2 106.5 L15.8 105.5 L16.4 107.3 L17.1 104.7 L17.7 106.0 L18.3 106.4 L18.9 105.9 L19.5 105.6 L20.1 105.9 L20.7 106.3 L21.3 106.6 L21.9 105.2 L22.5 106.0 L23.1 105.6 L23.7 106.5 L24.3 105.7 L24.9 106.0 L25.5 106.5 L26.1 105.7 L26.8 106.0 L27.4 105.5 L28.0 105.7 L28.6 104.9 L29.2 105.4 L29.8 105.6 L30.4 105.5 L31.0 107.0 L31.6 104.7 L32.2 104.7 L32.8 106.0 L33.4 106.2 L34.0 105.9 L34.6 106.4 L35.2 106.9 L35.8 105.6 L36.5 105.1 L37.1 105.7 L37.7 106.4 L38.3 106.0 L38.9 105.7 L39.5 106.0 L40.1 105.9 L40.7 104.9 L41.3 106.0 L41.9 105.4 L42.5 105.7 L43.1 105.5 L43.7 105.8 L44.3 106.3 L44.9 105.7 L45.5 105.9 L46.1 106.2 L46.8 106.0 L47.4 105.4 L48.0 106.2 L48.6 105.5 L49.2 105.6 L49.8 105.9 L50.4 106.5 L51.0 105.3 L51.6 105.5 L52.2 105.8 L52.8 105.3 L53.4 105.8 L54.0 106.4 L54.6 104.8 L55.2 105.7 L55.8 105.3 L56.5 106.8 L57.1 106.0 L57.7 106.0 L58.3 105.6 L58.9 105.2 L59.5 105.7 L60.1 105.9 L60.7 105.7 L61.3 106.6 L61.9 106.1 L62.5 105.2 L63.1 105.5 L63.7 105.8 L64.3 105.1 L64.9 105.6 L65.5 105.3 L66.1 105.8 L66.8 105.7 L67.4 105.3 L68.0 106.3 L68.6 105.4 L69.2 106.0 L69.8 105.1 L70.4 105.1 L71.0 105.3 L71.6 105.4 L72.2 106.1 L72.8 104.9 L73.4 106.5 L74.0 105.0 L74.6 106.4 L75.2 105.7 L75.8 105.4 L76.5 106.0 L77.1 105.4 L77.7 105.6 L78.3 105.6 L78.9 106.9 L79.5 105.1 L80.1 106.6 L80.7 105.4 L81.3 105.2 L81.9 105.3 L82.5 106.2 L83.1 105.5 L83.7 105.2 L84.3 105.9 L84.9 105.7 L85.5 106.1 L86.2 105.0 L86.8 106.3 L87.4 106.2 L88.0 105.2 L88.6 105.4 L89.2 105.8 L89.8 105.4 L90.4 105.9 L91.0 105.8 L91.6 105.5 L92.2 104.9 L92.8 104.5 L93.4 105.7 L94.0 104.9 L94.6 106.1 L95.2 106.4 L95.8 105.6 L96.5 105.9 L97.1 106.1 L97.7 105.9 L98.3 104.9 L98.9 105.0 L99.5 105.2 L100.1 105.5 L100.7 105.0 L101.3 105.6 L101.9 106.1 L102.5 105.3 L103.1 105.5 L103.7 104.9 L104.3 105.4 L104.9 105.9 L105.5 106.1 L106.2 105.6 L106.8 105.0 L107.4 106.5 L108.0 104.4 L108.6 105.2 L109.2 105.0 L109.8 105.4 L110.4 105.7 L111.0 105.2 L111.6 106.8 L112.2 106.5 L112.8 105.9 L113.4 105.2 L114.0 104.6 L114.6 106.0 L115.2 105.9 L115.8 105.6 L116.5 106.1 L117.1 105.6 L117.7 104.7 L118.3 104.4 L118.9 105.2 L119.5 105.4 L120.1 105.7 L120.7 105.5 L121.3 105.3 L121.9 104.9 L122.5 105.6 L123.1 105.7 L123.7 105.0 L124.3 104.8 L124.9 105.1 L125.5 104.8 L126.2 105.4 L126.8 104.7 L127.4 105.5 L128.0 104.9 L128.6 105.6 L129.2 106.6 L129.8 104.7 L130.4 105.4 L131.0 106.6 L131.6 105.8 L132.2 105.4 L132.8 105.6 L133.1 150.5 M169.0 150.5 L169.2 144.3 L169.8 125.6 L170.4 113.9 L171.0 108.8 L171.6 106.4 L172.2 106.9 L172.8 106.5 L173.4 105.1 L174.0 106.6 L174.6 105.3 L175.2 107.2 L175.9 105.5 L176.5 106.9 L177.1 106.4 L177.7 105.9 L178.3 110.8 L178.9 106.1 L179.5 104.5 L180.1 106.6 L180.7 105.6 L181.3 106.0 L181.9 106.5 L182.5 104.2 L183.1 106.4 L183.7 105.5 L184.3 105.8 L184.9 105.4 L185.6 106.1 L186.2 105.8 L186.8 106.9 L187.4 105.8 L188.0 107.1 L188.6 107.7 L189.2 106.7 L189.8 106.2 L190.4 107.2 L191.0 105.7 L191.6 106.3 L192.2 107.4 L192.8 106.8 L193.4 106.2 L194.0 106.1 L194.6 106.0 L195.2 107.5 L195.9 107.9 L196.5 107.5 L197.1 106.4 L197.7 106.6 L198.3 105.7 L198.9 105.5 L199.5 106.9 L200.1 106.9 L200.7 105.4 L201.3 105.4 L201.9 106.6 L202.5 105.4 L203.1 107.2 L203.7 107.3 L204.3 105.5 L204.9 106.2 L205.6 107.1 L206.2 107.2 L206.8 106.4 L207.4 106.3 L208.0 106.2 L208.6 106.8 L209.2 106.9 L209.8 106.2 L210.4 106.0 L211.0 106.3 L211.6 106.3 L212.2 106.1 L212.8 105.4 L213.4 106.5 L214.0 107.0 L214.6 106.5 L215.2 107.4 L215.9 106.7 L216.5 107.0 L217.1 107.1 L217.7 104.9 L218.3 107.0 L218.9 107.3 L219.5 105.6 L220.1 105.0 L220.7 105.7 L221.3 106.2 L221.9 106.7 L222.5 105.3 L223.1 106.3 L223.7 105.5 L224.3 106.6 L224.9 106.3 L225.6 106.6 L226.2 106.0 L226.8 103.4 L227.4 107.1 L228.0 105.6 L228.6 106.4 L229.2 106.0 L229.8 106.2 L230.4 105.9 L231.0 107.4 L231.6 107.2 L232.2 106.3 L232.8 108.0 L233.4 106.7 L234.0 107.6 L234.6 105.7 L235.3 106.1 L235.9 106.0 L236.5 108.1 L237.1 107.3 L237.7 106.2 L238.3 101.1 L238.9 106.4 L239.5 109.1 L240.1 105.8 L240.7 107.2 L241.3 106.8 L241.9 106.0 L242.5 106.8 L243.1 107.3 L243.7 106.8 L244.3 106.3 L244.9 107.1 L245.6 107.1 L246.2 108.1 L246.8 106.2 L247.4 106.9 L248.0 106.6 L248.6 106.2 L249.2 106.6 L249.8 105.5 L250.4 106.0 L251.0 105.5 L251.6 106.8 L252.2 106.3 L252.8 105.9 L253.4 106.2 L254.0 107.0 L254.6 106.3 L255.3 104.8 L255.9 102.1 L256.5 100.6 L257.1 101.1 L257.7 99.9 L258.3 100.1 L258.9 100.2 L259.5 100.2 L260.1 99.6 L260.7 100.7 L261.3 99.2 L261.9 99.3 L262.5 100.4 L263.1 99.2 L263.7 98.1 L264.3 99.2 L264.9 99.0 L265.6 99.3 L266.2 99.4 L266.8 98.3 L267.4 98.7 L268.0 98.1 L268.6 97.5 L269.2 97.4 L269.8 97.3 L270.4 96.8 L271.0 98.3 L271.6 97.0 L272.2 96.6 L272.8 97.1 L273.4 96.4 L274.0 97.5 L274.6 97.9 L275.3 97.0 L275.9 96.6 L276.5 96.4 L277.1 96.7 L277.7 96.8 L278.3 96.7 L278.9 95.9 L279.5 96.1 L280.1 95.1 L280.7 95.9 L281.3 96.2 L281.9 96.1 L282.5 95.0 L283.1 94.6 L283.7 96.3 L284.3 95.1 L285.0 94.9 L285.6 95.1 L286.2 94.7 L286.8 95.0 L287.4 94.9 L288.0 94.1 L288.6 93.6 L289.2 94.0 L289.8 92.9 L290.4 94.5 L291.0 93.6 L291.6 93.3 L292.2 93.9 L292.8 93.9 L293.4 93.3 L294.0 92.9 L294.6 92.4 L295.3 92.7 L295.9 92.7 L296.5 92.1 L297.1 92.7 L297.7 92.9 L298.3 92.5 L298.9 93.6 L299.5 92.4 L300.1 92.6 L300.7 93.6 L301.3 93.0 L301.9 92.2 L302.5 92.2 L303.1 91.9 L303.7 92.0 L304.3 91.8 L305.0 91.0 L305.6 91.0 L306.2 92.0 L306.8 92.5 L307.4 91.6 L308.0 90.9 L308.6 90.7 L309.2 92.1 L309.8 92.2 L310.4 91.8 L311.0 91.1 L311.6 90.8 L312.2 91.5 L312.8 90.8 L313.4 90.3 L314.0 89.6 L314.7 90.4 L315.3 90.5 L315.9 90.1 L316.5 91.3 L317.1 90.0 L317.7 91.0 L318.3 90.4 L318.9 90.1 L319.5 90.6 L320.1 89.5 L320.7 90.7 L321.3 89.7 L321.9 89.7 L322.5 90.1 L323.1 89.9 L323.7 89.3 L324.3 90.1 L325.0 89.1 L325.6 89.5 L326.2 89.0 L326.8 89.3 L327.4 89.7 L328.0 89.1 L328.6 88.7 L329.2 89.7 L329.8 89.3 L330.4 88.6 L331.0 88.7 L331.6 88.6 L332.2 90.1 L332.8 88.8 L333.4 89.4 L334.0 88.9 L334.7 88.9 L335.3 88.5 L335.9 87.3 L336.5 88.2 L337.1 88.3 L337.7 87.7 L338.3 88.9 L338.9 88.0 L339.5 87.8 L340.1 86.6 L340.7 88.2 L341.3 88.2 L341.9 86.8 L342.5 86.8 L343.1 87.9 L343.7 86.6 L344.3 87.4 L345.0 87.0 L345.6 87.8 L346.2 86.9 L346.8 87.1 L347.4 86.7 L348.0 85.7 L348.6 86.6 L349.2 87.3 L349.8 86.4 L350.4 86.5 L351.0 86.3 L351.6 86.6 L352.2 86.4 L352.8 86.7 L353.4 85.5 L354.0 85.0 L354.7 86.4 L355.3 85.5 L355.9 85.7 L356.5 86.4 L357.1 85.3 L357.7 86.4 L358.3 85.4 L358.9 84.3 L359.5 85.2 L360.1 85.2 L360.7 85.2 L361.3 84.9 L361.9 86.2 L362.5 85.6 L363.1 85.2 L363.7 84.5 L364.4 84.6 L365.0 84.8 L365.6 85.2 L366.2 83.6 L366.8 85.0 L367.4 84.9 L368.0 84.4 L368.6 84.4 L369.2 83.9 L369.8 84.0 L370.4 84.7 L371.0 84.4 L371.6 84.6 L372.2 84.3 L372.8 83.7 L373.4 84.4 L374.0 84.7 L374.7 84.7 L375.3 84.1 L375.9 82.9 L376.5 84.1 L377.1 82.7 L377.7 84.5 L378.3 83.1 L378.9 82.9 L379.5 84.0 L380.1 83.7 L380.7 83.4 L381.3 84.1 L381.9 83.1 L382.5 83.6 L383.1 83.4 L383.7 83.4 L384.4 83.4 L385.0 83.3 L385.6 82.1 L386.2 82.7 L386.8 83.0 L387.4 82.4 L388.0 83.3 L388.6 82.6 L389.2 82.2 L389.8 83.0 L390.4 82.2 L391.0 82.3 L391.6 82.4 L392.2 82.3 L392.8 82.6 L393.4 82.9 L394.0 82.1 L394.7 82.5 L395.3 82.2 L395.9 82.2 L396.5 81.8 L397.1 82.5 L397.7 81.9 L398.3 82.0 L398.9 81.8 L399.5 81.6 L400.1 82.2 L400.7 81.8 L401.3 81.2 L401.9 82.4 L402.5 82.7 L403.1 81.5 L403.7 82.3 L404.4 81.5 L405.0 81.9 L405.6 82.2 L406.2 81.3 L406.8 81.2 L407.4 81.4 L408.0 81.8 L408.6 82.0 L409.2 81.3 L409.8 81.7 L410.4 82.5 L411.0 81.7 L411.6 80.8 L412.2 81.7 L412.8 80.8 L413.4 81.1 L414.1 81.1 L414.7 81.9 L415.3 82.4 L415.9 82.0 L416.5 81.9 L417.1 81.0 L417.7 82.1 L418.3 82.0 L418.9 80.7 L419.5 82.2 L420.1 81.3 L420.7 81.2 L421.3 81.5 L421.9 82.1 L422.5 81.0 L423.1 81.6 L423.7 81.9 L424.4 81.0 L425.0 81.7 L425.6 81.1 L426.2 80.8 L426.8 81.0 L427.4 81.1 L428.0 81.6 L428.6 81.7 L429.2 81.3 L429.8 80.9 L430.4 80.8 L431.0 80.7 L431.6 79.8 L432.2 81.0 L432.8 81.5 L433.4 80.2 L434.1 80.8 L434.7 80.7 L435.3 80.6 L435.9 80.0 L436.5 79.8 L437.1 80.6 L437.7 80.6 L438.3 80.1 L438.9 80.9 L439.5 80.3 L440.1 80.5 L440.7 80.2 L441.3 81.0 L441.9 80.5 L442.5 80.3 L443.1 79.6 L443.7 81.3 L444.4 80.7 L445.0 81.2 L445.6 79.7 L446.2 80.1 L446.8 80.1 L447.4 79.8 L448.0 80.2 L448.6 80.1 L449.2 80.6 L449.8 80.4 L450.4 79.4 L451.0 80.4 L451.6 79.9 L452.2 80.7 L452.8 80.4 L453.4 80.3 L454.1 79.4 L454.7 79.9 L455.3 80.5 L455.9 79.8 L456.5 80.2 L457.1 79.0 L457.7 79.3 L458.3 79.7 L458.9 79.4 L459.5 79.1 L460.1 79.9 L460.7 79.5 L461.3 79.7 L461.9 79.5 L462.5 80.0 L463.1 78.5 L463.8 78.4 L464.4 79.6 L465.0 80.0 L465.6 79.4 L466.2 79.6 L466.8 79.2 L467.4 79.8 L468.0 79.6 L468.6 78.9 L469.2 80.1 L469.8 79.0 L470.4 78.4 L471.0 79.8 L471.6 79.2 L472.2 79.3 L472.8 78.5 L473.4 79.4 L474.1 79.2 L474.7 79.1 L475.3 79.9 L475.9 79.2 L476.5 79.7 L477.1 78.9 L477.7 79.1 L478.3 78.8 L478.9 79.4 L479.5 79.5 L480.1 79.3 L480.7 79.0 L481.3 78.3 L481.9 78.9 L482.5 79.9 L483.1 79.1 L483.8 79.3 L484.4 79.9 L485.0 78.8 L485.6 78.9 L486.2 79.1 L486.8 79.4 L487.4 79.7 L488.0 79.2 L488.6 78.7 L489.2 79.0 L489.8 79.0 L490.4 79.6 L491.0 78.3 L491.6 79.1 L492.2 79.0 L492.8 79.2 L493.4 78.8 L494.1 79.3 L494.7 78.8 L495.3 78.9 L495.9 80.0 L496.5 78.3 L497.1 79.8 L497.7 79.0 L498.3 78.5 L498.9 79.3 L499.5 78.5 L500.1 78.6 L500.7 78.4 L501.3 79.1 L501.9 78.0 L502.5 78.4 L503.1 78.2 L503.8 79.0 L504.4 79.2 L505.0 79.1 L505.6 78.3 L506.2 78.4 L506.8 78.0 L507.4 78.7 L508.0 78.1 L508.6 78.5 L509.2 77.8 L509.8 78.5 L510.4 79.5 L511.0 78.4 L511.6 78.5 L512.2 78.0 L512.8 78.0 L513.5 78.3 L514.1 77.7 L514.7 77.9 L515.3 78.6 L515.9 77.2 L516.5 78.4 L517.1 77.5 L517.7 78.0 L518.3 78.4 L518.9 77.9 L519.5 78.7 L520.1 77.7 L520.7 78.3 L521.3 79.5 L521.9 78.3 L522.5 77.9 L523.1 78.5 L523.8 78.5 L524.4 77.8 L525.0 78.2 L525.6 77.9 L526.2 78.0 L526.8 78.1 L527.4 77.2 L528.0 78.1 L528.6 78.0 L529.2 78.8 L529.8 78.0 L530.4 77.5 L531.0 78.4 L531.6 78.7 L532.2 78.8 L532.8 77.2 L533.5 79.0 L534.1 77.9 L534.7 77.5 L535.3 78.6 L535.9 78.1 L536.5 77.4 L537.1 78.2 L537.7 77.8 L538.3 77.9 L538.9 77.2 L539.5 78.0 L540.1 78.2 L540.7 77.8 L541.3 77.7 L541.9 77.5 L542.5 78.9 L543.1 77.8 L543.8 77.4 L544.4 77.5 L545.0 78.0 L545.6 77.8 L546.2 77.2 L546.8 77.6 L547.4 77.6 L548.0 78.2 L548.6 77.6 L549.2 77.3 L549.8 76.5 L550.4 77.9 L551.0 77.7 L551.6 77.0 L552.2 77.6 L552.8 77.4 L553.5 77.9 L554.1 77.8 L554.7 78.2 L555.3 77.4 L555.9 77.2 L556.5 77.9 L557.1 77.4 L557.7 77.0 L558.3 76.5 L558.9 77.4 L559.5 78.1 L560.1 77.6 L560.7 77.9 L561.3 78.0 L561.9 78.6 L562.5 77.6 L563.2 78.1 L563.8 77.8 L564.4 77.8 L565.0 77.7 L565.6 78.2 L566.2 77.7 L566.8 78.1 L567.4 77.8 L568.0 77.6 L568.6 77.9 L569.2 77.8 L569.8 78.2 L570.4 77.9 L571.0 78.2 L571.6 77.9 L572.2 77.5 L572.8 78.4 L573.5 78.7 L574.1 78.6 L574.7 77.9 L575.3 77.9 L575.9 78.3 L576.5 77.7 L577.1 79.2 L577.7 78.6 L578.3 78.7 L578.9 78.4 L579.5 78.8 L580.1 79.0 L580.7 78.1 L581.3 78.1 L581.9 78.8 L582.5 79.1 L583.2 78.2 L583.8 79.1 L584.4 79.1 L585.0 78.4 L585.6 79.8 L586.2 78.7 L586.8 78.9 L587.4 79.3 L588.0 79.0 L588.6 79.0 L589.2 78.7 L589.8 78.8 L590.4 79.0 L591.0 78.1 L591.6 79.8 L592.2 78.8 L592.8 79.2 L593.5 78.6 L594.1 79.3 L594.7 78.9 L595.3 79.9 L595.9 78.3 L596.5 78.8 L597.1 77.9 L597.7 79.0 L598.3 79.6 L598.9 78.8 L599.5 79.0 L600.1 79.4 L600.7 79.0 L601.3 78.5 L601.9 77.9 L602.5 78.7 L603.2 78.5 L603.8 78.7 L604.4 77.7 L605.0 78.1 L605.6 79.4 L606.2 78.1 L606.8 78.1 L607.4 78.6 L608.0 78.1 L608.6 77.1 L609.2 78.3 L609.8 78.4 L610.4 77.9 L611.0 78.4 L611.6 77.8 L612.2 78.3 L612.9 78.2 L613.5 78.5 L614.1 78.8 L614.7 78.1 L615.3 79.2 L615.9 78.2 L616.5 78.5 L617.1 78.2 L617.7 78.4 L618.3 79.6 L618.9 78.5 L619.5 78.7 L620.1 78.7 L620.7 78.6 L621.3 78.9 L621.9 78.0 L622.5 79.0 L623.2 78.2 L623.8 79.1 L624.4 79.1 L625.0 78.9 L625.6 78.8 L626.2 79.6 L626.8 78.9 L627.4 77.7 L628.0 78.7 L628.6 79.1 L629.2 78.7" stroke="#3c3cff" stroke-width="1.3" fill="none" stroke-linejoin="round"/>
<rect x="11.05" y="8.4" width="619.5" height="141.85" fill="none" stroke="#848484" stroke-width="2"/>
</g>
<g transform="translate(0,-1)">
<text class="tick" x="7.3" y="14.0" text-anchor="end">8500</text>
<text class="tick" x="7.3" y="49.1" text-anchor="end">8250</text>
<text class="tick" x="7.3" y="84.2" text-anchor="end">8000</text>
<text class="tick" x="7.3" y="119.3" text-anchor="end">7750</text>
<text class="tick" x="7.3" y="154.4" text-anchor="end">7500</text>
<text class="tick" x="12.0" y="166.4" text-anchor="middle">0</text>
<text class="tick" x="72.6" y="166.4" text-anchor="middle">100</text>
<text class="tick" x="133.2" y="166.4" text-anchor="middle">200</text>
<text class="tick" x="193.8" y="166.4" text-anchor="middle">300</text>
<text class="tick" x="254.4" y="166.4" text-anchor="middle">400</text>
<text class="tick" x="315.1" y="166.4" text-anchor="middle">500</text>
<text class="tick" x="375.7" y="166.4" text-anchor="middle">600</text>
<text class="tick" x="436.3" y="166.4" text-anchor="middle">700</text>
<text class="tick" x="496.9" y="166.4" text-anchor="middle">800</text>
<text class="tick" x="557.5" y="166.4" text-anchor="middle">900</text>
<text class="tick" x="618.1" y="166.4" text-anchor="middle">1000</text>
</g>
<g transform="translate(0,-1)">
<rect x="523.6" y="18.4" width="14.8" height="10.8" fill="#fffffa" stroke="#ccc" stroke-width="1"/>
<rect x="525.3" y="20" width="11.6" height="7.9" fill="#0000ff"/>
</g>
<text class="leg" x="542.2" y="28" fill="#7e7e7e">aida03 1.8.W</text>
<g transform="translate(0,-0.3)">
<path d="M629.2 -2 L640.2 9 L629.2 20 L618.2 9 Z" fill="#ff0000"/>
</g>
</svg>
<svg class="abs" style="left:1116px;top:823px;overflow:visible" width="640" height="170" viewBox="0 0 640 170">
<g transform="translate(0,-0.3)">
<path d="M72.2 9.4 V149.6 M132.8 9.4 V149.6 M193.4 9.4 V149.6 M254.0 9.4 V149.6 M314.7 9.4 V149.6 M375.3 9.4 V149.6 M435.9 9.4 V149.6 M496.5 9.4 V149.6 M557.1 9.4 V149.6 M617.7 9.4 V149.6 M12 44.5 H630 M12 79.6 H630 M12 114.7 H630" stroke="#d8d8d8" stroke-width="1.6" fill="none"/>
<clipPath id="cpaida12"><rect x="11" y="9" width="620" height="140.7"/></clipPath>
<path clip-path="url(#cpaida12)" d="M11.6 118.3 L12.2 119.1 L12.8 118.2 L13.4 118.9 L14.0 118.1 L14.6 119.1 L15.2 118.6 L15.8 119.4 L16.4 119.1 L17.1 118.7 L17.7 118.6 L18.3 118.9 L18.9 118.7 L19.5 118.3 L20.1 119.0 L20.7 117.5 L21.3 118.7 L21.9 119.8 L22.5 119.0 L23.1 118.0 L23.7 119.3 L24.3 118.8 L24.9 118.4 L25.5 118.4 L26.1 118.8 L26.8 119.2 L27.4 118.7 L28.0 119.6 L28.6 118.5 L29.2 119.2 L29.8 118.0 L30.4 117.8 L31.0 118.7 L31.6 118.9 L32.2 119.7 L32.8 118.6 L33.4 118.9 L34.0 118.2 L34.6 118.8 L35.2 119.1 L35.8 118.6 L36.5 119.3 L37.1 119.5 L37.7 119.1 L38.3 118.8 L38.9 118.7 L39.5 119.1 L40.1 118.3 L40.7 119.3 L41.3 118.6 L41.9 119.0 L42.5 118.3 L43.1 118.4 L43.7 118.5 L44.3 119.1 L44.9 118.9 L45.5 118.9 L46.1 119.4 L46.8 118.4 L47.4 119.3 L48.0 118.6 L48.6 118.4 L49.2 118.6 L49.8 119.4 L50.4 119.7 L51.0 118.6 L51.6 118.4 L52.2 118.1 L52.8 118.9 L53.4 119.1 L54.0 119.1 L54.6 119.0 L55.2 119.6 L55.8 118.9 L56.5 119.1 L57.1 118.8 L57.7 118.5 L58.3 117.8 L58.9 119.0 L59.5 118.6 L60.1 118.7 L60.7 118.6 L61.3 119.0 L61.9 119.0 L62.5 117.8 L63.1 118.8 L63.7 119.2 L64.3 119.1 L64.9 118.9 L65.5 119.1 L66.1 118.2 L66.8 119.1 L67.4 118.8 L68.0 119.0 L68.6 119.3 L69.2 119.0 L69.8 118.4 L70.4 118.0 L71.0 118.8 L71.6 119.0 L72.2 119.1 L72.8 119.5 L73.4 119.2 L74.0 119.2 L74.6 118.1 L75.2 119.4 L75.8 119.1 L76.5 120.1 L77.1 119.4 L77.7 118.7 L78.3 119.1 L78.9 119.4 L79.5 118.6 L80.1 118.2 L80.7 119.3 L81.3 118.8 L81.9 119.0 L82.5 119.1 L83.1 118.9 L83.7 119.5 L84.3 119.2 L84.9 119.2 L85.5 119.5 L86.2 119.1 L86.8 118.5 L87.4 119.1 L88.0 118.4 L88.6 119.2 L89.2 118.5 L89.8 119.1 L90.4 119.7 L91.0 119.4 L91.6 118.7 L92.2 118.4 L92.8 118.9 L93.4 119.6 L94.0 119.4 L94.6 118.4 L95.2 119.6 L95.8 119.3 L96.5 119.5 L97.1 119.8 L97.7 118.7 L98.3 119.4 L98.9 119.2 L99.5 119.7 L100.1 119.0 L100.7 118.5 L101.3 119.2 L101.9 119.7 L102.5 119.0 L103.1 119.0 L103.7 119.3 L104.3 119.1 L104.9 119.0 L105.5 119.0 L106.2 119.9 L106.8 119.0 L107.4 119.3 L108.0 119.8 L108.6 119.8 L109.2 118.4 L109.8 118.8 L110.4 118.6 L111.0 119.2 L111.6 118.1 L112.2 118.5 L112.8 119.2 L113.4 119.4 L114.0 118.7 L114.6 119.4 L115.2 119.9 L115.8 118.8 L116.5 119.9 L117.1 119.2 L117.7 118.2 L118.3 119.3 L118.9 119.3 L119.5 120.0 L120.1 118.9 L120.7 120.2 L121.3 119.3 L121.9 119.5 L122.5 119.2 L123.1 119.5 L123.7 119.9 L124.3 119.3 L124.9 119.0 L125.5 119.6 L126.2 119.2 L126.8 119.5 L127.4 119.8 L128.0 119.4 L128.6 119.5 L129.2 119.4 L129.8 119.4 L130.4 119.8 L131.0 119.9 L131.6 119.5 L132.2 118.5 L132.8 118.6 L133.1 150.5 M169.0 150.5 L169.2 136.6 L169.8 126.3 L170.4 121.4 L171.0 119.2 L171.6 119.5 L172.2 119.0 L172.8 119.7 L173.4 119.3 L174.0 118.6 L174.6 119.8 L175.2 119.4 L175.9 121.0 L176.5 120.2 L177.1 118.3 L177.7 120.1 L178.3 118.8 L178.9 119.0 L179.5 119.3 L180.1 118.5 L180.7 121.3 L181.3 120.1 L181.9 118.8 L182.5 115.3 L183.1 117.8 L183.7 120.4 L184.3 119.6 L184.9 119.7 L185.6 120.2 L186.2 117.0 L186.8 119.9 L187.4 118.8 L188.0 119.8 L188.6 119.3 L189.2 119.9 L189.8 119.4 L190.4 119.9 L191.0 119.2 L191.6 118.6 L192.2 119.0 L192.8 120.3 L193.4 119.4 L194.0 119.7 L194.6 119.3 L195.2 120.3 L195.9 119.0 L196.5 117.7 L197.1 119.1 L197.7 119.2 L198.3 120.5 L198.9 119.0 L199.5 119.3 L200.1 120.0 L200.7 120.2 L201.3 119.4 L201.9 120.6 L202.5 119.3 L203.1 119.8 L203.7 119.0 L204.3 118.1 L204.9 119.2 L205.6 119.2 L206.2 119.0 L206.8 121.4 L207.4 118.5 L208.0 120.1 L208.6 120.9 L209.2 120.3 L209.8 120.1 L210.4 119.3 L211.0 119.3 L211.6 120.7 L212.2 120.9 L212.8 119.3 L213.4 120.1 L214.0 119.7 L214.6 120.3 L215.2 119.2 L215.9 120.5 L216.5 119.5 L217.1 120.0 L217.7 119.3 L218.3 120.5 L218.9 119.6 L219.5 120.2 L220.1 119.8 L220.7 120.4 L221.3 120.1 L221.9 121.6 L222.5 119.3 L223.1 120.5 L223.7 119.5 L224.3 119.9 L224.9 118.6 L225.6 120.7 L226.2 118.1 L226.8 120.4 L227.4 118.7 L228.0 119.6 L228.6 120.2 L229.2 119.3 L229.8 120.1 L230.4 119.8 L231.0 119.4 L231.6 120.2 L232.2 121.0 L232.8 120.2 L233.4 119.9 L234.0 120.0 L234.6 119.9 L235.3 120.9 L235.9 120.6 L236.5 119.8 L237.1 120.2 L237.7 119.2 L238.3 119.9 L238.9 120.2 L239.5 119.9 L240.1 119.9 L240.7 120.7 L241.3 120.5 L241.9 120.5 L242.5 118.3 L243.1 120.1 L243.7 119.5 L244.3 119.6 L244.9 120.0 L245.6 120.4 L246.2 118.6 L246.8 121.2 L247.4 120.4 L248.0 119.9 L248.6 119.2 L249.2 119.0 L249.8 116.0 L250.4 114.7 L251.0 114.7 L251.6 114.6 L252.2 114.5 L252.8 115.6 L253.4 115.1 L254.0 113.5 L254.6 113.4 L255.3 114.5 L255.9 113.7 L256.5 112.9 L257.1 113.0 L257.7 113.6 L258.3 112.8 L258.9 112.7 L259.5 113.9 L260.1 112.7 L260.7 111.8 L261.3 112.4 L261.9 111.4 L262.5 111.5 L263.1 111.4 L263.7 110.9 L264.3 111.4 L264.9 111.1 L265.6 110.9 L266.2 111.3 L266.8 111.2 L267.4 110.4 L268.0 111.0 L268.6 110.9 L269.2 109.9 L269.8 110.4 L270.4 109.2 L271.0 109.0 L271.6 109.5 L272.2 109.8 L272.8 110.4 L273.4 109.1 L274.0 109.6 L274.6 108.1 L275.3 108.8 L275.9 109.1 L276.5 108.1 L277.1 108.3 L277.7 108.3 L278.3 108.9 L278.9 107.2 L279.5 107.2 L280.1 107.9 L280.7 107.8 L281.3 107.4 L281.9 106.8 L282.5 107.0 L283.1 107.9 L283.7 106.5 L284.3 107.0 L285.0 107.1 L285.6 105.8 L286.2 105.9 L286.8 106.4 L287.4 105.9 L288.0 105.9 L288.6 105.3 L289.2 105.5 L289.8 105.3 L290.4 106.2 L291.0 105.3 L291.6 105.2 L292.2 105.6 L292.8 105.0 L293.4 104.7 L294.0 104.9 L294.6 103.6 L295.3 104.2 L295.9 104.3 L296.5 104.0 L297.1 103.9 L297.7 103.9 L298.3 103.2 L298.9 104.1 L299.5 103.2 L300.1 103.8 L300.7 102.7 L301.3 104.4 L301.9 103.4 L302.5 102.0 L303.1 102.0 L303.7 102.0 L304.3 102.5 L305.0 102.4 L305.6 103.3 L306.2 103.3 L306.8 101.5 L307.4 101.9 L308.0 101.1 L308.6 101.6 L309.2 102.0 L309.8 102.0 L310.4 101.8 L311.0 102.4 L311.6 101.0 L312.2 101.0 L312.8 101.4 L313.4 101.7 L314.0 101.0 L314.7 101.2 L315.3 101.8 L315.9 100.5 L316.5 100.8 L317.1 100.1 L317.7 101.0 L318.3 99.7 L318.9 100.5 L319.5 101.5 L320.1 100.2 L320.7 99.9 L321.3 100.2 L321.9 100.1 L322.5 99.7 L323.1 99.5 L323.7 99.8 L324.3 99.7 L325.0 99.1 L325.6 99.6 L326.2 99.0 L326.8 99.1 L327.4 98.9 L328.0 98.4 L328.6 98.0 L329.2 99.7 L329.8 98.3 L330.4 98.4 L331.0 98.7 L331.6 99.0 L332.2 98.4 L332.8 98.0 L333.4 98.7 L334.0 98.6 L334.7 97.9 L335.3 98.2 L335.9 98.2 L336.5 99.2 L337.1 98.2 L337.7 97.5 L338.3 98.0 L338.9 97.2 L339.5 98.0 L340.1 98.4 L340.7 98.3 L341.3 97.9 L341.9 97.4 L342.5 97.5 L343.1 97.1 L343.7 97.4 L344.3 96.6 L345.0 96.1 L345.6 97.4 L346.2 97.1 L346.8 96.7 L347.4 96.8 L348.0 97.5 L348.6 96.9 L349.2 97.4 L349.8 97.2 L350.4 96.4 L351.0 97.7 L351.6 97.3 L352.2 96.3 L352.8 96.7 L353.4 96.1 L354.0 96.6 L354.7 97.2 L355.3 96.4 L355.9 96.2 L356.5 96.8 L357.1 96.1 L357.7 96.6 L358.3 97.1 L358.9 96.8 L359.5 96.1 L360.1 96.2 L360.7 97.0 L361.3 97.2 L361.9 96.1 L362.5 96.3 L363.1 96.0 L363.7 95.8 L364.4 95.8 L365.0 96.1 L365.6 96.8 L366.2 96.8 L366.8 97.2 L367.4 95.8 L368.0 95.5 L368.6 96.5 L369.2 95.4 L369.8 95.7 L370.4 96.7 L371.0 96.6 L371.6 96.6 L372.2 95.6 L372.8 96.5 L373.4 96.2 L374.0 95.6 L374.7 96.3 L375.3 96.8 L375.9 95.6 L376.5 96.9 L377.1 96.1 L377.7 95.7 L378.3 94.7 L378.9 95.4 L379.5 95.4 L380.1 95.2 L380.7 96.1 L381.3 96.1 L381.9 95.7 L382.5 95.7 L383.1 95.6 L383.7 95.2 L384.4 95.4 L385.0 96.6 L385.6 95.2 L386.2 96.0 L386.8 96.0 L387.4 95.6 L388.0 96.0 L388.6 95.5 L389.2 95.4 L389.8 95.4 L390.4 96.1 L391.0 95.4 L391.6 94.2 L392.2 95.5 L392.8 95.4 L393.4 95.5 L394.0 95.4 L394.7 95.5 L395.3 96.4 L395.9 95.7 L396.5 95.6 L397.1 94.6 L397.7 95.1 L398.3 95.0 L398.9 95.0 L399.5 95.2 L400.1 94.7 L400.7 94.7 L401.3 95.0 L401.9 95.6 L402.5 95.1 L403.1 95.6 L403.7 96.1 L404.4 94.8 L405.0 95.2 L405.6 95.4 L406.2 94.4 L406.8 95.2 L407.4 95.0 L408.0 96.0 L408.6 94.9 L409.2 95.4 L409.8 95.4 L410.4 94.4 L411.0 94.5 L411.6 95.6 L412.2 94.8 L412.8 95.9 L413.4 94.7 L414.1 94.5 L414.7 94.8 L415.3 95.7 L415.9 95.1 L416.5 96.3 L417.1 94.2 L417.7 94.7 L418.3 95.2 L418.9 95.0 L419.5 94.8 L420.1 95.2 L420.7 94.4 L421.3 95.4 L421.9 94.9 L422.5 94.6 L423.1 94.7 L423.7 94.6 L424.4 94.9 L425.0 93.8 L425.6 94.7 L426.2 94.4 L426.8 94.3 L427.4 95.4 L428.0 94.9 L428.6 94.6 L429.2 94.7 L429.8 95.8 L430.4 94.8 L431.0 94.4 L431.6 94.8 L432.2 94.8 L432.8 94.5 L433.4 95.6 L434.1 94.4 L434.7 94.6 L435.3 94.8 L435.9 94.9 L436.5 94.5 L437.1 94.9 L437.7 95.3 L438.3 95.2 L438.9 94.8 L439.5 94.9 L440.1 95.6 L440.7 95.0 L441.3 94.8 L441.9 94.8 L442.5 95.8 L443.1 94.6 L443.7 95.9 L444.4 95.0 L445.0 95.2 L445.6 94.9 L446.2 95.4 L446.8 95.4 L447.4 94.8 L448.0 94.7 L448.6 94.2 L449.2 94.5 L449.8 95.3 L450.4 95.1 L451.0 95.0 L451.6 95.0 L452.2 94.9 L452.8 95.4 L453.4 95.0 L454.1 95.0 L454.7 95.8 L455.3 95.1 L455.9 95.1 L456.5 95.0 L457.1 94.9 L457.7 94.9 L458.3 95.5 L458.9 94.5 L459.5 94.9 L460.1 94.9 L460.7 93.9 L461.3 95.6 L461.9 94.5 L462.5 95.2 L463.1 95.3 L463.8 94.9 L464.4 94.8 L465.0 96.6 L465.6 95.2 L466.2 95.0 L466.8 94.9 L467.4 95.3 L468.0 95.0 L468.6 94.7 L469.2 95.8 L469.8 94.9 L470.4 95.8 L471.0 95.9 L471.6 95.9 L472.2 95.8 L472.8 95.0 L473.4 95.7 L474.1 95.5 L474.7 95.8 L475.3 95.4 L475.9 96.2 L476.5 95.8 L477.1 96.0 L477.7 96.8 L478.3 95.2 L478.9 95.6 L479.5 95.0 L480.1 95.1 L480.7 95.3 L481.3 96.0 L481.9 95.3 L482.5 96.6 L483.1 96.0 L483.8 95.9 L484.4 96.8 L485.0 96.0 L485.6 95.5 L486.2 95.7 L486.8 96.7 L487.4 96.2 L488.0 95.4 L488.6 96.2 L489.2 96.1 L489.8 96.2 L490.4 95.6 L491.0 95.2 L491.6 95.0 L492.2 95.4 L492.8 95.7 L493.4 95.5 L494.1 95.7 L494.7 96.1 L495.3 95.6 L495.9 96.0 L496.5 95.3 L497.1 96.1 L497.7 97.0 L498.3 96.2 L498.9 95.9 L499.5 95.4 L500.1 96.9 L500.7 96.6 L501.3 96.6 L501.9 95.9 L502.5 96.6 L503.1 96.0 L503.8 96.3 L504.4 95.0 L505.0 96.2 L505.6 96.4 L506.2 96.9 L506.8 97.0 L507.4 96.9 L508.0 96.6 L508.6 96.3 L509.2 96.3 L509.8 97.0 L510.4 95.6 L511.0 96.3 L511.6 95.5 L512.2 95.9 L512.8 96.5 L513.5 96.7 L514.1 95.6 L514.7 96.1 L515.3 95.4 L515.9 96.9 L516.5 96.5 L517.1 97.5 L517.7 95.7 L518.3 96.5 L518.9 97.6 L519.5 96.4 L520.1 96.8 L520.7 95.9 L521.3 96.2 L521.9 97.3 L522.5 96.2 L523.1 96.3 L523.8 97.4 L524.4 97.5 L525.0 97.2 L525.6 95.7 L526.2 96.3 L526.8 96.9 L527.4 95.9 L528.0 96.3 L528.6 96.5 L529.2 97.2 L529.8 95.9 L530.4 95.6 L531.0 96.3 L531.6 96.3 L532.2 96.8 L532.8 95.0 L533.5 97.4 L534.1 96.7 L534.7 96.8 L535.3 96.7 L535.9 97.2 L536.5 96.9 L537.1 96.1 L537.7 96.9 L538.3 97.2 L538.9 97.0 L539.5 98.1 L540.1 96.2 L540.7 97.6 L541.3 97.2 L541.9 98.0 L542.5 97.4 L543.1 97.2 L543.8 97.2 L544.4 97.3 L545.0 97.5 L545.6 98.4 L546.2 98.2 L546.8 97.2 L547.4 97.3 L548.0 97.3 L548.6 97.5 L549.2 97.1 L549.8 98.3 L550.4 97.6 L551.0 97.9 L551.6 97.9 L552.2 97.7 L552.8 97.4 L553.5 97.5 L554.1 97.0 L554.7 97.7 L555.3 97.8 L555.9 98.4 L556.5 97.7 L557.1 98.4 L557.7 97.6 L558.3 97.6 L558.9 98.2 L559.5 97.3 L560.1 97.9 L560.7 97.6 L561.3 97.9 L561.9 98.8 L562.5 97.8 L563.2 97.7 L563.8 98.5 L564.4 98.2 L565.0 97.0 L565.6 98.0 L566.2 98.2 L566.8 99.2 L567.4 98.1 L568.0 97.3 L568.6 98.1 L569.2 98.7 L569.8 98.4 L570.4 97.7 L571.0 98.0 L571.6 98.1 L572.2 99.0 L572.8 98.9 L573.5 98.1 L574.1 99.3 L574.7 99.2 L575.3 98.6 L575.9 98.9 L576.5 98.3 L577.1 98.1 L577.7 99.1 L578.3 99.0 L578.9 99.3 L579.5 99.3 L580.1 99.0 L580.7 100.0 L581.3 97.9 L581.9 99.0 L582.5 99.6 L583.2 98.9 L583.8 99.0 L584.4 99.4 L585.0 99.7 L585.6 99.8 L586.2 99.8 L586.8 99.5 L587.4 99.0 L588.0 99.4 L588.6 99.2 L589.2 100.1 L589.8 99.8 L590.4 98.3 L591.0 98.3 L591.6 98.8 L592.2 98.7 L592.8 98.7 L593.5 99.7 L594.1 99.7 L594.7 99.3 L595.3 99.6 L595.9 99.6 L596.5 99.2 L597.1 99.8 L597.7 99.4 L598.3 100.1 L598.9 99.1 L599.5 99.6 L600.1 99.3 L600.7 100.6 L601.3 100.1 L601.9 100.5 L602.5 99.7 L603.2 99.6 L603.8 98.9 L604.4 100.5 L605.0 99.6 L605.6 99.8 L606.2 99.9 L606.8 99.5 L607.4 99.0 L608.0 99.7 L608.6 101.2 L609.2 99.9 L609.8 100.0 L610.4 100.0 L611.0 99.9 L611.6 100.1 L612.2 99.6 L612.9 99.5 L613.5 99.3 L614.1 99.9 L614.7 100.4 L615.3 100.3 L615.9 101.0 L616.5 99.7 L617.1 99.5 L617.7 99.9 L618.3 100.6 L618.9 99.1 L619.5 100.6 L620.1 100.2 L620.7 101.0 L621.3 100.2 L621.9 99.7 L622.5 99.6 L623.2 100.9 L623.8 100.5 L624.4 100.1 L625.0 100.2 L625.6 100.5 L626.2 100.5 L626.8 100.1 L627.4 100.6 L628.0 99.9 L628.6 99.7 L629.2 100.6" stroke="#3c3cff" stroke-width="1.3" fill="none" stroke-linejoin="round"/>
<rect x="11.05" y="8.4" width="619.5" height="141.85" fill="none" stroke="#000" stroke-width="2"/>
</g>
<g transform="translate(0,-1)">
<text class="tick" x="7.3" y="14.0" text-anchor="end">8500</text>
<text class="tick" x="7.3" y="49.1" text-anchor="end">8250</text>
<text class="tick" x="7.3" y="84.2" text-anchor="end">8000</text>
<text class="tick" x="7.3" y="119.3" text-anchor="end">7750</text>
<text class="tick" x="7.3" y="154.4" text-anchor="end">7500</text>
<text class="tick" x="12.0" y="166.4" text-anchor="middle">0</text>
<text class="tick" x="72.6" y="166.4" text-anchor="middle">100</text>
<text class="tick" x="133.2" y="166.4" text-anchor="middle">200</text>
<text class="tick" x="193.8" y="166.4" text-anchor="middle">300</text>
<text class="tick" x="254.4" y="166.4" text-anchor="middle">400</text>
<text class="tick" x="315.1" y="166.4" text-anchor="middle">500</text>
<text class="tick" x="375.7" y="166.4" text-anchor="middle">600</text>
<text class="tick" x="436.3" y="166.4" text-anchor="middle">700</text>
<text class="tick" x="496.9" y="166.4" text-anchor="middle">800</text>
<text class="tick" x="557.5" y="166.4" text-anchor="middle">900</text>
<text class="tick" x="618.1" y="166.4" text-anchor="middle">1000</text>
</g>
<g transform="translate(0,-1)">
<rect x="523.6" y="18.4" width="13.9" height="10.8" fill="#fffffa" stroke="#ccc" stroke-width="1"/>
<rect x="525.3" y="20" width="10.7" height="7.9" fill="#0000ff"/>
</g>
<text class="leg" x="542.2" y="28" fill="#000">aida12 1.8.W</text>
<g transform="translate(0,-0.3)">
<path d="M629.2 -2 L640.2 9 L629.2 20 L618.2 9 Z" fill="#00ff00"/>
</g>
</svg>
</div>
</body>
</html>
